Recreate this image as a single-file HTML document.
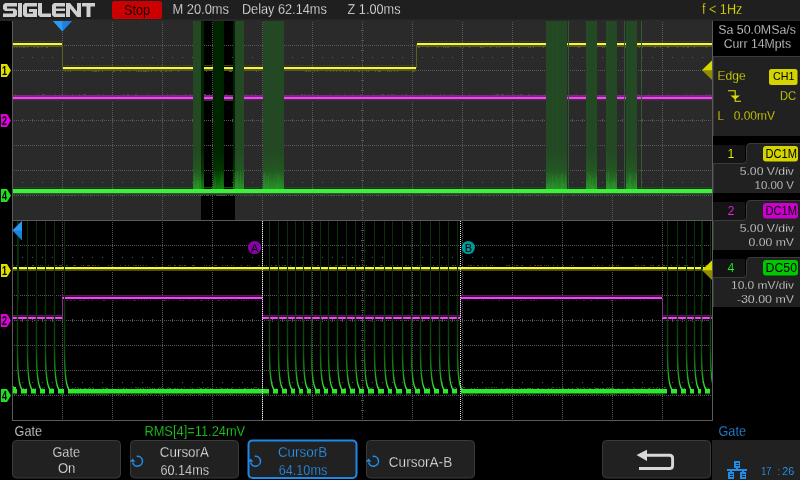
<!DOCTYPE html><html><head><meta charset="utf-8"><style>html,body{margin:0;padding:0;background:#000;overflow:hidden}svg{display:block;will-change:transform}text{font-family:"Liberation Sans",sans-serif}</style></head><body><svg width="800" height="480" viewBox="0 0 800 480" shape-rendering="crispEdges"><rect x="0" y="0" width="800" height="480" fill="#000" />
<rect x="0" y="0" width="800" height="19" fill="#1f1f1f" />
<rect x="0" y="19" width="800" height="2" fill="#252525" />
<rect x="13" y="20" width="699" height="200" fill="#2a2a2a" />
<rect x="201" y="21" width="34" height="199" fill="#000" />
<line x1="14" y1="45.5" x2="712" y2="45.5" stroke="#585858" stroke-width="1" stroke-dasharray="1 1"/>
<line x1="14" y1="70.5" x2="712" y2="70.5" stroke="#585858" stroke-width="1" stroke-dasharray="1 1"/>
<line x1="14" y1="95.5" x2="712" y2="95.5" stroke="#585858" stroke-width="1" stroke-dasharray="1 1"/>
<line x1="14" y1="120.5" x2="712" y2="120.5" stroke="#585858" stroke-width="1" stroke-dasharray="1 1"/>
<line x1="14" y1="145.5" x2="712" y2="145.5" stroke="#585858" stroke-width="1" stroke-dasharray="1 1"/>
<line x1="14" y1="170.5" x2="712" y2="170.5" stroke="#585858" stroke-width="1" stroke-dasharray="1 1"/>
<line x1="14" y1="195.5" x2="712" y2="195.5" stroke="#585858" stroke-width="1" stroke-dasharray="1 1"/>
<line x1="62.5" y1="22" x2="62.5" y2="220" stroke="#585858" stroke-width="1" stroke-dasharray="1 1"/>
<line x1="112.5" y1="22" x2="112.5" y2="220" stroke="#585858" stroke-width="1" stroke-dasharray="1 1"/>
<line x1="162.5" y1="22" x2="162.5" y2="220" stroke="#585858" stroke-width="1" stroke-dasharray="1 1"/>
<line x1="212.5" y1="22" x2="212.5" y2="220" stroke="#585858" stroke-width="1" stroke-dasharray="1 1"/>
<line x1="262.5" y1="22" x2="262.5" y2="220" stroke="#585858" stroke-width="1" stroke-dasharray="1 1"/>
<line x1="312.5" y1="22" x2="312.5" y2="220" stroke="#585858" stroke-width="1" stroke-dasharray="1 1"/>
<line x1="362.5" y1="22" x2="362.5" y2="220" stroke="#585858" stroke-width="1" stroke-dasharray="1 1"/>
<line x1="412.5" y1="22" x2="412.5" y2="220" stroke="#585858" stroke-width="1" stroke-dasharray="1 1"/>
<line x1="462.5" y1="22" x2="462.5" y2="220" stroke="#585858" stroke-width="1" stroke-dasharray="1 1"/>
<line x1="512.5" y1="22" x2="512.5" y2="220" stroke="#585858" stroke-width="1" stroke-dasharray="1 1"/>
<line x1="562.5" y1="22" x2="562.5" y2="220" stroke="#585858" stroke-width="1" stroke-dasharray="1 1"/>
<line x1="612.5" y1="22" x2="612.5" y2="220" stroke="#585858" stroke-width="1" stroke-dasharray="1 1"/>
<line x1="662.5" y1="22" x2="662.5" y2="220" stroke="#585858" stroke-width="1" stroke-dasharray="1 1"/>
<rect x="22" y="57" width="1" height="1" fill="#585858" />
<rect x="32" y="57" width="1" height="1" fill="#585858" />
<rect x="42" y="57" width="1" height="1" fill="#585858" />
<rect x="52" y="57" width="1" height="1" fill="#585858" />
<rect x="72" y="57" width="1" height="1" fill="#585858" />
<rect x="82" y="57" width="1" height="1" fill="#585858" />
<rect x="92" y="57" width="1" height="1" fill="#585858" />
<rect x="102" y="57" width="1" height="1" fill="#585858" />
<rect x="122" y="57" width="1" height="1" fill="#585858" />
<rect x="132" y="57" width="1" height="1" fill="#585858" />
<rect x="142" y="57" width="1" height="1" fill="#585858" />
<rect x="152" y="57" width="1" height="1" fill="#585858" />
<rect x="172" y="57" width="1" height="1" fill="#585858" />
<rect x="182" y="57" width="1" height="1" fill="#585858" />
<rect x="192" y="57" width="1" height="1" fill="#585858" />
<rect x="202" y="57" width="1" height="1" fill="#585858" />
<rect x="222" y="57" width="1" height="1" fill="#585858" />
<rect x="232" y="57" width="1" height="1" fill="#585858" />
<rect x="242" y="57" width="1" height="1" fill="#585858" />
<rect x="252" y="57" width="1" height="1" fill="#585858" />
<rect x="272" y="57" width="1" height="1" fill="#585858" />
<rect x="282" y="57" width="1" height="1" fill="#585858" />
<rect x="292" y="57" width="1" height="1" fill="#585858" />
<rect x="302" y="57" width="1" height="1" fill="#585858" />
<rect x="322" y="57" width="1" height="1" fill="#585858" />
<rect x="332" y="57" width="1" height="1" fill="#585858" />
<rect x="342" y="57" width="1" height="1" fill="#585858" />
<rect x="352" y="57" width="1" height="1" fill="#585858" />
<rect x="372" y="57" width="1" height="1" fill="#585858" />
<rect x="382" y="57" width="1" height="1" fill="#585858" />
<rect x="392" y="57" width="1" height="1" fill="#585858" />
<rect x="402" y="57" width="1" height="1" fill="#585858" />
<rect x="422" y="57" width="1" height="1" fill="#585858" />
<rect x="432" y="57" width="1" height="1" fill="#585858" />
<rect x="442" y="57" width="1" height="1" fill="#585858" />
<rect x="452" y="57" width="1" height="1" fill="#585858" />
<rect x="472" y="57" width="1" height="1" fill="#585858" />
<rect x="482" y="57" width="1" height="1" fill="#585858" />
<rect x="492" y="57" width="1" height="1" fill="#585858" />
<rect x="502" y="57" width="1" height="1" fill="#585858" />
<rect x="522" y="57" width="1" height="1" fill="#585858" />
<rect x="532" y="57" width="1" height="1" fill="#585858" />
<rect x="542" y="57" width="1" height="1" fill="#585858" />
<rect x="552" y="57" width="1" height="1" fill="#585858" />
<rect x="572" y="57" width="1" height="1" fill="#585858" />
<rect x="582" y="57" width="1" height="1" fill="#585858" />
<rect x="592" y="57" width="1" height="1" fill="#585858" />
<rect x="602" y="57" width="1" height="1" fill="#585858" />
<rect x="622" y="57" width="1" height="1" fill="#585858" />
<rect x="632" y="57" width="1" height="1" fill="#585858" />
<rect x="642" y="57" width="1" height="1" fill="#585858" />
<rect x="652" y="57" width="1" height="1" fill="#585858" />
<rect x="672" y="57" width="1" height="1" fill="#585858" />
<rect x="682" y="57" width="1" height="1" fill="#585858" />
<rect x="692" y="57" width="1" height="1" fill="#585858" />
<rect x="702" y="57" width="1" height="1" fill="#585858" />
<rect x="22" y="182" width="1" height="1" fill="#585858" />
<rect x="32" y="182" width="1" height="1" fill="#585858" />
<rect x="42" y="182" width="1" height="1" fill="#585858" />
<rect x="52" y="182" width="1" height="1" fill="#585858" />
<rect x="72" y="182" width="1" height="1" fill="#585858" />
<rect x="82" y="182" width="1" height="1" fill="#585858" />
<rect x="92" y="182" width="1" height="1" fill="#585858" />
<rect x="102" y="182" width="1" height="1" fill="#585858" />
<rect x="122" y="182" width="1" height="1" fill="#585858" />
<rect x="132" y="182" width="1" height="1" fill="#585858" />
<rect x="142" y="182" width="1" height="1" fill="#585858" />
<rect x="152" y="182" width="1" height="1" fill="#585858" />
<rect x="172" y="182" width="1" height="1" fill="#585858" />
<rect x="182" y="182" width="1" height="1" fill="#585858" />
<rect x="192" y="182" width="1" height="1" fill="#585858" />
<rect x="202" y="182" width="1" height="1" fill="#585858" />
<rect x="222" y="182" width="1" height="1" fill="#585858" />
<rect x="232" y="182" width="1" height="1" fill="#585858" />
<rect x="242" y="182" width="1" height="1" fill="#585858" />
<rect x="252" y="182" width="1" height="1" fill="#585858" />
<rect x="272" y="182" width="1" height="1" fill="#585858" />
<rect x="282" y="182" width="1" height="1" fill="#585858" />
<rect x="292" y="182" width="1" height="1" fill="#585858" />
<rect x="302" y="182" width="1" height="1" fill="#585858" />
<rect x="322" y="182" width="1" height="1" fill="#585858" />
<rect x="332" y="182" width="1" height="1" fill="#585858" />
<rect x="342" y="182" width="1" height="1" fill="#585858" />
<rect x="352" y="182" width="1" height="1" fill="#585858" />
<rect x="372" y="182" width="1" height="1" fill="#585858" />
<rect x="382" y="182" width="1" height="1" fill="#585858" />
<rect x="392" y="182" width="1" height="1" fill="#585858" />
<rect x="402" y="182" width="1" height="1" fill="#585858" />
<rect x="422" y="182" width="1" height="1" fill="#585858" />
<rect x="432" y="182" width="1" height="1" fill="#585858" />
<rect x="442" y="182" width="1" height="1" fill="#585858" />
<rect x="452" y="182" width="1" height="1" fill="#585858" />
<rect x="472" y="182" width="1" height="1" fill="#585858" />
<rect x="482" y="182" width="1" height="1" fill="#585858" />
<rect x="492" y="182" width="1" height="1" fill="#585858" />
<rect x="502" y="182" width="1" height="1" fill="#585858" />
<rect x="522" y="182" width="1" height="1" fill="#585858" />
<rect x="532" y="182" width="1" height="1" fill="#585858" />
<rect x="542" y="182" width="1" height="1" fill="#585858" />
<rect x="552" y="182" width="1" height="1" fill="#585858" />
<rect x="572" y="182" width="1" height="1" fill="#585858" />
<rect x="582" y="182" width="1" height="1" fill="#585858" />
<rect x="592" y="182" width="1" height="1" fill="#585858" />
<rect x="602" y="182" width="1" height="1" fill="#585858" />
<rect x="622" y="182" width="1" height="1" fill="#585858" />
<rect x="632" y="182" width="1" height="1" fill="#585858" />
<rect x="642" y="182" width="1" height="1" fill="#585858" />
<rect x="652" y="182" width="1" height="1" fill="#585858" />
<rect x="672" y="182" width="1" height="1" fill="#585858" />
<rect x="682" y="182" width="1" height="1" fill="#585858" />
<rect x="692" y="182" width="1" height="1" fill="#585858" />
<rect x="702" y="182" width="1" height="1" fill="#585858" />
<rect x="22" y="119" width="1" height="3" fill="#585858" />
<rect x="32" y="119" width="1" height="3" fill="#585858" />
<rect x="42" y="119" width="1" height="3" fill="#585858" />
<rect x="52" y="119" width="1" height="3" fill="#585858" />
<rect x="62" y="119" width="1" height="3" fill="#585858" />
<rect x="72" y="119" width="1" height="3" fill="#585858" />
<rect x="82" y="119" width="1" height="3" fill="#585858" />
<rect x="92" y="119" width="1" height="3" fill="#585858" />
<rect x="102" y="119" width="1" height="3" fill="#585858" />
<rect x="112" y="119" width="1" height="3" fill="#585858" />
<rect x="122" y="119" width="1" height="3" fill="#585858" />
<rect x="132" y="119" width="1" height="3" fill="#585858" />
<rect x="142" y="119" width="1" height="3" fill="#585858" />
<rect x="152" y="119" width="1" height="3" fill="#585858" />
<rect x="162" y="119" width="1" height="3" fill="#585858" />
<rect x="172" y="119" width="1" height="3" fill="#585858" />
<rect x="182" y="119" width="1" height="3" fill="#585858" />
<rect x="192" y="119" width="1" height="3" fill="#585858" />
<rect x="202" y="119" width="1" height="3" fill="#585858" />
<rect x="212" y="119" width="1" height="3" fill="#585858" />
<rect x="222" y="119" width="1" height="3" fill="#585858" />
<rect x="232" y="119" width="1" height="3" fill="#585858" />
<rect x="242" y="119" width="1" height="3" fill="#585858" />
<rect x="252" y="119" width="1" height="3" fill="#585858" />
<rect x="262" y="119" width="1" height="3" fill="#585858" />
<rect x="272" y="119" width="1" height="3" fill="#585858" />
<rect x="282" y="119" width="1" height="3" fill="#585858" />
<rect x="292" y="119" width="1" height="3" fill="#585858" />
<rect x="302" y="119" width="1" height="3" fill="#585858" />
<rect x="312" y="119" width="1" height="3" fill="#585858" />
<rect x="322" y="119" width="1" height="3" fill="#585858" />
<rect x="332" y="119" width="1" height="3" fill="#585858" />
<rect x="342" y="119" width="1" height="3" fill="#585858" />
<rect x="352" y="119" width="1" height="3" fill="#585858" />
<rect x="362" y="119" width="1" height="3" fill="#585858" />
<rect x="372" y="119" width="1" height="3" fill="#585858" />
<rect x="382" y="119" width="1" height="3" fill="#585858" />
<rect x="392" y="119" width="1" height="3" fill="#585858" />
<rect x="402" y="119" width="1" height="3" fill="#585858" />
<rect x="412" y="119" width="1" height="3" fill="#585858" />
<rect x="422" y="119" width="1" height="3" fill="#585858" />
<rect x="432" y="119" width="1" height="3" fill="#585858" />
<rect x="442" y="119" width="1" height="3" fill="#585858" />
<rect x="452" y="119" width="1" height="3" fill="#585858" />
<rect x="462" y="119" width="1" height="3" fill="#585858" />
<rect x="472" y="119" width="1" height="3" fill="#585858" />
<rect x="482" y="119" width="1" height="3" fill="#585858" />
<rect x="492" y="119" width="1" height="3" fill="#585858" />
<rect x="502" y="119" width="1" height="3" fill="#585858" />
<rect x="512" y="119" width="1" height="3" fill="#585858" />
<rect x="522" y="119" width="1" height="3" fill="#585858" />
<rect x="532" y="119" width="1" height="3" fill="#585858" />
<rect x="542" y="119" width="1" height="3" fill="#585858" />
<rect x="552" y="119" width="1" height="3" fill="#585858" />
<rect x="562" y="119" width="1" height="3" fill="#585858" />
<rect x="572" y="119" width="1" height="3" fill="#585858" />
<rect x="582" y="119" width="1" height="3" fill="#585858" />
<rect x="592" y="119" width="1" height="3" fill="#585858" />
<rect x="602" y="119" width="1" height="3" fill="#585858" />
<rect x="612" y="119" width="1" height="3" fill="#585858" />
<rect x="622" y="119" width="1" height="3" fill="#585858" />
<rect x="632" y="119" width="1" height="3" fill="#585858" />
<rect x="642" y="119" width="1" height="3" fill="#585858" />
<rect x="652" y="119" width="1" height="3" fill="#585858" />
<rect x="662" y="119" width="1" height="3" fill="#585858" />
<rect x="672" y="119" width="1" height="3" fill="#585858" />
<rect x="682" y="119" width="1" height="3" fill="#585858" />
<rect x="692" y="119" width="1" height="3" fill="#585858" />
<rect x="702" y="119" width="1" height="3" fill="#585858" />
<rect x="361" y="30" width="3" height="1" fill="#585858" />
<rect x="361" y="40" width="3" height="1" fill="#585858" />
<rect x="361" y="50" width="3" height="1" fill="#585858" />
<rect x="361" y="60" width="3" height="1" fill="#585858" />
<rect x="361" y="70" width="3" height="1" fill="#585858" />
<rect x="361" y="80" width="3" height="1" fill="#585858" />
<rect x="361" y="90" width="3" height="1" fill="#585858" />
<rect x="361" y="100" width="3" height="1" fill="#585858" />
<rect x="361" y="110" width="3" height="1" fill="#585858" />
<rect x="361" y="120" width="3" height="1" fill="#585858" />
<rect x="361" y="130" width="3" height="1" fill="#585858" />
<rect x="361" y="140" width="3" height="1" fill="#585858" />
<rect x="361" y="150" width="3" height="1" fill="#585858" />
<rect x="361" y="160" width="3" height="1" fill="#585858" />
<rect x="361" y="170" width="3" height="1" fill="#585858" />
<rect x="361" y="180" width="3" height="1" fill="#585858" />
<rect x="361" y="190" width="3" height="1" fill="#585858" />
<rect x="361" y="200" width="3" height="1" fill="#585858" />
<rect x="361" y="210" width="3" height="1" fill="#585858" />
<line x1="14" y1="245.5" x2="712" y2="245.5" stroke="#585858" stroke-width="1" stroke-dasharray="1 1"/>
<line x1="14" y1="270.5" x2="712" y2="270.5" stroke="#585858" stroke-width="1" stroke-dasharray="1 1"/>
<line x1="14" y1="295.5" x2="712" y2="295.5" stroke="#585858" stroke-width="1" stroke-dasharray="1 1"/>
<line x1="14" y1="320.5" x2="712" y2="320.5" stroke="#585858" stroke-width="1" stroke-dasharray="1 1"/>
<line x1="14" y1="345.5" x2="712" y2="345.5" stroke="#585858" stroke-width="1" stroke-dasharray="1 1"/>
<line x1="14" y1="370.5" x2="712" y2="370.5" stroke="#585858" stroke-width="1" stroke-dasharray="1 1"/>
<line x1="14" y1="395.5" x2="712" y2="395.5" stroke="#585858" stroke-width="1" stroke-dasharray="1 1"/>
<line x1="62.5" y1="222" x2="62.5" y2="420" stroke="#585858" stroke-width="1" stroke-dasharray="1 1"/>
<line x1="112.5" y1="222" x2="112.5" y2="420" stroke="#585858" stroke-width="1" stroke-dasharray="1 1"/>
<line x1="162.5" y1="222" x2="162.5" y2="420" stroke="#585858" stroke-width="1" stroke-dasharray="1 1"/>
<line x1="212.5" y1="222" x2="212.5" y2="420" stroke="#585858" stroke-width="1" stroke-dasharray="1 1"/>
<line x1="262.5" y1="222" x2="262.5" y2="420" stroke="#585858" stroke-width="1" stroke-dasharray="1 1"/>
<line x1="312.5" y1="222" x2="312.5" y2="420" stroke="#585858" stroke-width="1" stroke-dasharray="1 1"/>
<line x1="362.5" y1="222" x2="362.5" y2="420" stroke="#585858" stroke-width="1" stroke-dasharray="1 1"/>
<line x1="412.5" y1="222" x2="412.5" y2="420" stroke="#585858" stroke-width="1" stroke-dasharray="1 1"/>
<line x1="462.5" y1="222" x2="462.5" y2="420" stroke="#585858" stroke-width="1" stroke-dasharray="1 1"/>
<line x1="512.5" y1="222" x2="512.5" y2="420" stroke="#585858" stroke-width="1" stroke-dasharray="1 1"/>
<line x1="562.5" y1="222" x2="562.5" y2="420" stroke="#585858" stroke-width="1" stroke-dasharray="1 1"/>
<line x1="612.5" y1="222" x2="612.5" y2="420" stroke="#585858" stroke-width="1" stroke-dasharray="1 1"/>
<line x1="662.5" y1="222" x2="662.5" y2="420" stroke="#585858" stroke-width="1" stroke-dasharray="1 1"/>
<rect x="22" y="257" width="1" height="1" fill="#585858" />
<rect x="32" y="257" width="1" height="1" fill="#585858" />
<rect x="42" y="257" width="1" height="1" fill="#585858" />
<rect x="52" y="257" width="1" height="1" fill="#585858" />
<rect x="72" y="257" width="1" height="1" fill="#585858" />
<rect x="82" y="257" width="1" height="1" fill="#585858" />
<rect x="92" y="257" width="1" height="1" fill="#585858" />
<rect x="102" y="257" width="1" height="1" fill="#585858" />
<rect x="122" y="257" width="1" height="1" fill="#585858" />
<rect x="132" y="257" width="1" height="1" fill="#585858" />
<rect x="142" y="257" width="1" height="1" fill="#585858" />
<rect x="152" y="257" width="1" height="1" fill="#585858" />
<rect x="172" y="257" width="1" height="1" fill="#585858" />
<rect x="182" y="257" width="1" height="1" fill="#585858" />
<rect x="192" y="257" width="1" height="1" fill="#585858" />
<rect x="202" y="257" width="1" height="1" fill="#585858" />
<rect x="222" y="257" width="1" height="1" fill="#585858" />
<rect x="232" y="257" width="1" height="1" fill="#585858" />
<rect x="242" y="257" width="1" height="1" fill="#585858" />
<rect x="252" y="257" width="1" height="1" fill="#585858" />
<rect x="272" y="257" width="1" height="1" fill="#585858" />
<rect x="282" y="257" width="1" height="1" fill="#585858" />
<rect x="292" y="257" width="1" height="1" fill="#585858" />
<rect x="302" y="257" width="1" height="1" fill="#585858" />
<rect x="322" y="257" width="1" height="1" fill="#585858" />
<rect x="332" y="257" width="1" height="1" fill="#585858" />
<rect x="342" y="257" width="1" height="1" fill="#585858" />
<rect x="352" y="257" width="1" height="1" fill="#585858" />
<rect x="372" y="257" width="1" height="1" fill="#585858" />
<rect x="382" y="257" width="1" height="1" fill="#585858" />
<rect x="392" y="257" width="1" height="1" fill="#585858" />
<rect x="402" y="257" width="1" height="1" fill="#585858" />
<rect x="422" y="257" width="1" height="1" fill="#585858" />
<rect x="432" y="257" width="1" height="1" fill="#585858" />
<rect x="442" y="257" width="1" height="1" fill="#585858" />
<rect x="452" y="257" width="1" height="1" fill="#585858" />
<rect x="472" y="257" width="1" height="1" fill="#585858" />
<rect x="482" y="257" width="1" height="1" fill="#585858" />
<rect x="492" y="257" width="1" height="1" fill="#585858" />
<rect x="502" y="257" width="1" height="1" fill="#585858" />
<rect x="522" y="257" width="1" height="1" fill="#585858" />
<rect x="532" y="257" width="1" height="1" fill="#585858" />
<rect x="542" y="257" width="1" height="1" fill="#585858" />
<rect x="552" y="257" width="1" height="1" fill="#585858" />
<rect x="572" y="257" width="1" height="1" fill="#585858" />
<rect x="582" y="257" width="1" height="1" fill="#585858" />
<rect x="592" y="257" width="1" height="1" fill="#585858" />
<rect x="602" y="257" width="1" height="1" fill="#585858" />
<rect x="622" y="257" width="1" height="1" fill="#585858" />
<rect x="632" y="257" width="1" height="1" fill="#585858" />
<rect x="642" y="257" width="1" height="1" fill="#585858" />
<rect x="652" y="257" width="1" height="1" fill="#585858" />
<rect x="672" y="257" width="1" height="1" fill="#585858" />
<rect x="682" y="257" width="1" height="1" fill="#585858" />
<rect x="692" y="257" width="1" height="1" fill="#585858" />
<rect x="702" y="257" width="1" height="1" fill="#585858" />
<rect x="22" y="382" width="1" height="1" fill="#585858" />
<rect x="32" y="382" width="1" height="1" fill="#585858" />
<rect x="42" y="382" width="1" height="1" fill="#585858" />
<rect x="52" y="382" width="1" height="1" fill="#585858" />
<rect x="72" y="382" width="1" height="1" fill="#585858" />
<rect x="82" y="382" width="1" height="1" fill="#585858" />
<rect x="92" y="382" width="1" height="1" fill="#585858" />
<rect x="102" y="382" width="1" height="1" fill="#585858" />
<rect x="122" y="382" width="1" height="1" fill="#585858" />
<rect x="132" y="382" width="1" height="1" fill="#585858" />
<rect x="142" y="382" width="1" height="1" fill="#585858" />
<rect x="152" y="382" width="1" height="1" fill="#585858" />
<rect x="172" y="382" width="1" height="1" fill="#585858" />
<rect x="182" y="382" width="1" height="1" fill="#585858" />
<rect x="192" y="382" width="1" height="1" fill="#585858" />
<rect x="202" y="382" width="1" height="1" fill="#585858" />
<rect x="222" y="382" width="1" height="1" fill="#585858" />
<rect x="232" y="382" width="1" height="1" fill="#585858" />
<rect x="242" y="382" width="1" height="1" fill="#585858" />
<rect x="252" y="382" width="1" height="1" fill="#585858" />
<rect x="272" y="382" width="1" height="1" fill="#585858" />
<rect x="282" y="382" width="1" height="1" fill="#585858" />
<rect x="292" y="382" width="1" height="1" fill="#585858" />
<rect x="302" y="382" width="1" height="1" fill="#585858" />
<rect x="322" y="382" width="1" height="1" fill="#585858" />
<rect x="332" y="382" width="1" height="1" fill="#585858" />
<rect x="342" y="382" width="1" height="1" fill="#585858" />
<rect x="352" y="382" width="1" height="1" fill="#585858" />
<rect x="372" y="382" width="1" height="1" fill="#585858" />
<rect x="382" y="382" width="1" height="1" fill="#585858" />
<rect x="392" y="382" width="1" height="1" fill="#585858" />
<rect x="402" y="382" width="1" height="1" fill="#585858" />
<rect x="422" y="382" width="1" height="1" fill="#585858" />
<rect x="432" y="382" width="1" height="1" fill="#585858" />
<rect x="442" y="382" width="1" height="1" fill="#585858" />
<rect x="452" y="382" width="1" height="1" fill="#585858" />
<rect x="472" y="382" width="1" height="1" fill="#585858" />
<rect x="482" y="382" width="1" height="1" fill="#585858" />
<rect x="492" y="382" width="1" height="1" fill="#585858" />
<rect x="502" y="382" width="1" height="1" fill="#585858" />
<rect x="522" y="382" width="1" height="1" fill="#585858" />
<rect x="532" y="382" width="1" height="1" fill="#585858" />
<rect x="542" y="382" width="1" height="1" fill="#585858" />
<rect x="552" y="382" width="1" height="1" fill="#585858" />
<rect x="572" y="382" width="1" height="1" fill="#585858" />
<rect x="582" y="382" width="1" height="1" fill="#585858" />
<rect x="592" y="382" width="1" height="1" fill="#585858" />
<rect x="602" y="382" width="1" height="1" fill="#585858" />
<rect x="622" y="382" width="1" height="1" fill="#585858" />
<rect x="632" y="382" width="1" height="1" fill="#585858" />
<rect x="642" y="382" width="1" height="1" fill="#585858" />
<rect x="652" y="382" width="1" height="1" fill="#585858" />
<rect x="672" y="382" width="1" height="1" fill="#585858" />
<rect x="682" y="382" width="1" height="1" fill="#585858" />
<rect x="692" y="382" width="1" height="1" fill="#585858" />
<rect x="702" y="382" width="1" height="1" fill="#585858" />
<rect x="22" y="319" width="1" height="3" fill="#585858" />
<rect x="32" y="319" width="1" height="3" fill="#585858" />
<rect x="42" y="319" width="1" height="3" fill="#585858" />
<rect x="52" y="319" width="1" height="3" fill="#585858" />
<rect x="62" y="319" width="1" height="3" fill="#585858" />
<rect x="72" y="319" width="1" height="3" fill="#585858" />
<rect x="82" y="319" width="1" height="3" fill="#585858" />
<rect x="92" y="319" width="1" height="3" fill="#585858" />
<rect x="102" y="319" width="1" height="3" fill="#585858" />
<rect x="112" y="319" width="1" height="3" fill="#585858" />
<rect x="122" y="319" width="1" height="3" fill="#585858" />
<rect x="132" y="319" width="1" height="3" fill="#585858" />
<rect x="142" y="319" width="1" height="3" fill="#585858" />
<rect x="152" y="319" width="1" height="3" fill="#585858" />
<rect x="162" y="319" width="1" height="3" fill="#585858" />
<rect x="172" y="319" width="1" height="3" fill="#585858" />
<rect x="182" y="319" width="1" height="3" fill="#585858" />
<rect x="192" y="319" width="1" height="3" fill="#585858" />
<rect x="202" y="319" width="1" height="3" fill="#585858" />
<rect x="212" y="319" width="1" height="3" fill="#585858" />
<rect x="222" y="319" width="1" height="3" fill="#585858" />
<rect x="232" y="319" width="1" height="3" fill="#585858" />
<rect x="242" y="319" width="1" height="3" fill="#585858" />
<rect x="252" y="319" width="1" height="3" fill="#585858" />
<rect x="262" y="319" width="1" height="3" fill="#585858" />
<rect x="272" y="319" width="1" height="3" fill="#585858" />
<rect x="282" y="319" width="1" height="3" fill="#585858" />
<rect x="292" y="319" width="1" height="3" fill="#585858" />
<rect x="302" y="319" width="1" height="3" fill="#585858" />
<rect x="312" y="319" width="1" height="3" fill="#585858" />
<rect x="322" y="319" width="1" height="3" fill="#585858" />
<rect x="332" y="319" width="1" height="3" fill="#585858" />
<rect x="342" y="319" width="1" height="3" fill="#585858" />
<rect x="352" y="319" width="1" height="3" fill="#585858" />
<rect x="362" y="319" width="1" height="3" fill="#585858" />
<rect x="372" y="319" width="1" height="3" fill="#585858" />
<rect x="382" y="319" width="1" height="3" fill="#585858" />
<rect x="392" y="319" width="1" height="3" fill="#585858" />
<rect x="402" y="319" width="1" height="3" fill="#585858" />
<rect x="412" y="319" width="1" height="3" fill="#585858" />
<rect x="422" y="319" width="1" height="3" fill="#585858" />
<rect x="432" y="319" width="1" height="3" fill="#585858" />
<rect x="442" y="319" width="1" height="3" fill="#585858" />
<rect x="452" y="319" width="1" height="3" fill="#585858" />
<rect x="462" y="319" width="1" height="3" fill="#585858" />
<rect x="472" y="319" width="1" height="3" fill="#585858" />
<rect x="482" y="319" width="1" height="3" fill="#585858" />
<rect x="492" y="319" width="1" height="3" fill="#585858" />
<rect x="502" y="319" width="1" height="3" fill="#585858" />
<rect x="512" y="319" width="1" height="3" fill="#585858" />
<rect x="522" y="319" width="1" height="3" fill="#585858" />
<rect x="532" y="319" width="1" height="3" fill="#585858" />
<rect x="542" y="319" width="1" height="3" fill="#585858" />
<rect x="552" y="319" width="1" height="3" fill="#585858" />
<rect x="562" y="319" width="1" height="3" fill="#585858" />
<rect x="572" y="319" width="1" height="3" fill="#585858" />
<rect x="582" y="319" width="1" height="3" fill="#585858" />
<rect x="592" y="319" width="1" height="3" fill="#585858" />
<rect x="602" y="319" width="1" height="3" fill="#585858" />
<rect x="612" y="319" width="1" height="3" fill="#585858" />
<rect x="622" y="319" width="1" height="3" fill="#585858" />
<rect x="632" y="319" width="1" height="3" fill="#585858" />
<rect x="642" y="319" width="1" height="3" fill="#585858" />
<rect x="652" y="319" width="1" height="3" fill="#585858" />
<rect x="662" y="319" width="1" height="3" fill="#585858" />
<rect x="672" y="319" width="1" height="3" fill="#585858" />
<rect x="682" y="319" width="1" height="3" fill="#585858" />
<rect x="692" y="319" width="1" height="3" fill="#585858" />
<rect x="702" y="319" width="1" height="3" fill="#585858" />
<rect x="361" y="230" width="3" height="1" fill="#585858" />
<rect x="361" y="240" width="3" height="1" fill="#585858" />
<rect x="361" y="250" width="3" height="1" fill="#585858" />
<rect x="361" y="260" width="3" height="1" fill="#585858" />
<rect x="361" y="270" width="3" height="1" fill="#585858" />
<rect x="361" y="280" width="3" height="1" fill="#585858" />
<rect x="361" y="290" width="3" height="1" fill="#585858" />
<rect x="361" y="300" width="3" height="1" fill="#585858" />
<rect x="361" y="310" width="3" height="1" fill="#585858" />
<rect x="361" y="320" width="3" height="1" fill="#585858" />
<rect x="361" y="330" width="3" height="1" fill="#585858" />
<rect x="361" y="340" width="3" height="1" fill="#585858" />
<rect x="361" y="350" width="3" height="1" fill="#585858" />
<rect x="361" y="360" width="3" height="1" fill="#585858" />
<rect x="361" y="370" width="3" height="1" fill="#585858" />
<rect x="361" y="380" width="3" height="1" fill="#585858" />
<rect x="361" y="390" width="3" height="1" fill="#585858" />
<rect x="361" y="400" width="3" height="1" fill="#585858" />
<rect x="361" y="410" width="3" height="1" fill="#585858" />
<rect x="13" y="41" width="49" height="1" fill="#3c3c1e" />
<rect x="13" y="43" width="49" height="2" fill="#f6f63c" />
<rect x="13" y="45" width="49" height="1" fill="#56561e" />
<rect x="13" y="46" width="49" height="1" fill="#5c5c22" />
<rect x="14" y="47" width="1" height="1" fill="#56562a" />
<rect x="16" y="47" width="1" height="1" fill="#56562a" />
<rect x="19" y="47" width="1" height="1" fill="#56562a" />
<rect x="21" y="47" width="1" height="1" fill="#56562a" />
<rect x="23" y="47" width="1" height="1" fill="#56562a" />
<rect x="24" y="47" width="1" height="1" fill="#56562a" />
<rect x="27" y="47" width="1" height="1" fill="#56562a" />
<rect x="34" y="47" width="1" height="1" fill="#56562a" />
<rect x="37" y="47" width="1" height="1" fill="#56562a" />
<rect x="38" y="47" width="1" height="1" fill="#56562a" />
<rect x="41" y="47" width="1" height="1" fill="#56562a" />
<rect x="46" y="47" width="1" height="1" fill="#56562a" />
<rect x="47" y="47" width="1" height="1" fill="#56562a" />
<rect x="62" y="44" width="1" height="24" fill="#5e5e20" />
<rect x="63" y="65" width="353" height="1" fill="#3c3c1e" />
<rect x="63" y="67" width="353" height="2" fill="#f6f63c" />
<rect x="63" y="69" width="353" height="1" fill="#56561e" />
<rect x="63" y="70" width="353" height="1" fill="#5c5c22" />
<rect x="65" y="71" width="1" height="1" fill="#56562a" />
<rect x="68" y="71" width="1" height="1" fill="#56562a" />
<rect x="70" y="71" width="1" height="1" fill="#56562a" />
<rect x="84" y="71" width="1" height="1" fill="#56562a" />
<rect x="92" y="71" width="1" height="1" fill="#56562a" />
<rect x="94" y="71" width="1" height="1" fill="#56562a" />
<rect x="95" y="71" width="1" height="1" fill="#56562a" />
<rect x="96" y="71" width="1" height="1" fill="#56562a" />
<rect x="98" y="71" width="1" height="1" fill="#56562a" />
<rect x="102" y="71" width="1" height="1" fill="#56562a" />
<rect x="113" y="71" width="1" height="1" fill="#56562a" />
<rect x="114" y="71" width="1" height="1" fill="#56562a" />
<rect x="120" y="71" width="1" height="1" fill="#56562a" />
<rect x="129" y="71" width="1" height="1" fill="#56562a" />
<rect x="136" y="71" width="1" height="1" fill="#56562a" />
<rect x="138" y="71" width="1" height="1" fill="#56562a" />
<rect x="139" y="71" width="1" height="1" fill="#56562a" />
<rect x="141" y="71" width="1" height="1" fill="#56562a" />
<rect x="143" y="71" width="1" height="1" fill="#56562a" />
<rect x="144" y="71" width="1" height="1" fill="#56562a" />
<rect x="145" y="71" width="1" height="1" fill="#56562a" />
<rect x="146" y="71" width="1" height="1" fill="#56562a" />
<rect x="148" y="71" width="1" height="1" fill="#56562a" />
<rect x="151" y="71" width="1" height="1" fill="#56562a" />
<rect x="155" y="71" width="1" height="1" fill="#56562a" />
<rect x="160" y="71" width="1" height="1" fill="#56562a" />
<rect x="161" y="71" width="1" height="1" fill="#56562a" />
<rect x="165" y="71" width="1" height="1" fill="#56562a" />
<rect x="166" y="71" width="1" height="1" fill="#56562a" />
<rect x="169" y="71" width="1" height="1" fill="#56562a" />
<rect x="171" y="71" width="1" height="1" fill="#56562a" />
<rect x="178" y="71" width="1" height="1" fill="#56562a" />
<rect x="193" y="71" width="1" height="1" fill="#56562a" />
<rect x="194" y="71" width="1" height="1" fill="#56562a" />
<rect x="206" y="71" width="1" height="1" fill="#56562a" />
<rect x="214" y="71" width="1" height="1" fill="#56562a" />
<rect x="220" y="71" width="1" height="1" fill="#56562a" />
<rect x="229" y="71" width="1" height="1" fill="#56562a" />
<rect x="230" y="71" width="1" height="1" fill="#56562a" />
<rect x="231" y="71" width="1" height="1" fill="#56562a" />
<rect x="234" y="71" width="1" height="1" fill="#56562a" />
<rect x="240" y="71" width="1" height="1" fill="#56562a" />
<rect x="241" y="71" width="1" height="1" fill="#56562a" />
<rect x="256" y="71" width="1" height="1" fill="#56562a" />
<rect x="267" y="71" width="1" height="1" fill="#56562a" />
<rect x="269" y="71" width="1" height="1" fill="#56562a" />
<rect x="270" y="71" width="1" height="1" fill="#56562a" />
<rect x="272" y="71" width="1" height="1" fill="#56562a" />
<rect x="280" y="71" width="1" height="1" fill="#56562a" />
<rect x="305" y="71" width="1" height="1" fill="#56562a" />
<rect x="306" y="71" width="1" height="1" fill="#56562a" />
<rect x="308" y="71" width="1" height="1" fill="#56562a" />
<rect x="310" y="71" width="1" height="1" fill="#56562a" />
<rect x="314" y="71" width="1" height="1" fill="#56562a" />
<rect x="317" y="71" width="1" height="1" fill="#56562a" />
<rect x="326" y="71" width="1" height="1" fill="#56562a" />
<rect x="330" y="71" width="1" height="1" fill="#56562a" />
<rect x="333" y="71" width="1" height="1" fill="#56562a" />
<rect x="336" y="71" width="1" height="1" fill="#56562a" />
<rect x="340" y="71" width="1" height="1" fill="#56562a" />
<rect x="344" y="71" width="1" height="1" fill="#56562a" />
<rect x="346" y="71" width="1" height="1" fill="#56562a" />
<rect x="349" y="71" width="1" height="1" fill="#56562a" />
<rect x="354" y="71" width="1" height="1" fill="#56562a" />
<rect x="358" y="71" width="1" height="1" fill="#56562a" />
<rect x="359" y="71" width="1" height="1" fill="#56562a" />
<rect x="362" y="71" width="1" height="1" fill="#56562a" />
<rect x="366" y="71" width="1" height="1" fill="#56562a" />
<rect x="368" y="71" width="1" height="1" fill="#56562a" />
<rect x="375" y="71" width="1" height="1" fill="#56562a" />
<rect x="378" y="71" width="1" height="1" fill="#56562a" />
<rect x="379" y="71" width="1" height="1" fill="#56562a" />
<rect x="380" y="71" width="1" height="1" fill="#56562a" />
<rect x="387" y="71" width="1" height="1" fill="#56562a" />
<rect x="389" y="71" width="1" height="1" fill="#56562a" />
<rect x="391" y="71" width="1" height="1" fill="#56562a" />
<rect x="394" y="71" width="1" height="1" fill="#56562a" />
<rect x="397" y="71" width="1" height="1" fill="#56562a" />
<rect x="412" y="71" width="1" height="1" fill="#56562a" />
<rect x="413" y="71" width="1" height="1" fill="#56562a" />
<rect x="414" y="71" width="1" height="1" fill="#56562a" />
<rect x="416" y="44" width="1" height="24" fill="#5e5e20" />
<rect x="417" y="41" width="295" height="1" fill="#3c3c1e" />
<rect x="417" y="43" width="295" height="2" fill="#f6f63c" />
<rect x="417" y="45" width="295" height="1" fill="#56561e" />
<rect x="417" y="46" width="295" height="1" fill="#5c5c22" />
<rect x="418" y="47" width="1" height="1" fill="#56562a" />
<rect x="419" y="47" width="1" height="1" fill="#56562a" />
<rect x="427" y="47" width="1" height="1" fill="#56562a" />
<rect x="437" y="47" width="1" height="1" fill="#56562a" />
<rect x="443" y="47" width="1" height="1" fill="#56562a" />
<rect x="445" y="47" width="1" height="1" fill="#56562a" />
<rect x="447" y="47" width="1" height="1" fill="#56562a" />
<rect x="448" y="47" width="1" height="1" fill="#56562a" />
<rect x="460" y="47" width="1" height="1" fill="#56562a" />
<rect x="463" y="47" width="1" height="1" fill="#56562a" />
<rect x="469" y="47" width="1" height="1" fill="#56562a" />
<rect x="480" y="47" width="1" height="1" fill="#56562a" />
<rect x="481" y="47" width="1" height="1" fill="#56562a" />
<rect x="483" y="47" width="1" height="1" fill="#56562a" />
<rect x="490" y="47" width="1" height="1" fill="#56562a" />
<rect x="496" y="47" width="1" height="1" fill="#56562a" />
<rect x="499" y="47" width="1" height="1" fill="#56562a" />
<rect x="512" y="47" width="1" height="1" fill="#56562a" />
<rect x="513" y="47" width="1" height="1" fill="#56562a" />
<rect x="518" y="47" width="1" height="1" fill="#56562a" />
<rect x="519" y="47" width="1" height="1" fill="#56562a" />
<rect x="528" y="47" width="1" height="1" fill="#56562a" />
<rect x="530" y="47" width="1" height="1" fill="#56562a" />
<rect x="533" y="47" width="1" height="1" fill="#56562a" />
<rect x="543" y="47" width="1" height="1" fill="#56562a" />
<rect x="546" y="47" width="1" height="1" fill="#56562a" />
<rect x="554" y="47" width="1" height="1" fill="#56562a" />
<rect x="555" y="47" width="1" height="1" fill="#56562a" />
<rect x="559" y="47" width="1" height="1" fill="#56562a" />
<rect x="563" y="47" width="1" height="1" fill="#56562a" />
<rect x="566" y="47" width="1" height="1" fill="#56562a" />
<rect x="578" y="47" width="1" height="1" fill="#56562a" />
<rect x="579" y="47" width="1" height="1" fill="#56562a" />
<rect x="586" y="47" width="1" height="1" fill="#56562a" />
<rect x="596" y="47" width="1" height="1" fill="#56562a" />
<rect x="602" y="47" width="1" height="1" fill="#56562a" />
<rect x="604" y="47" width="1" height="1" fill="#56562a" />
<rect x="615" y="47" width="1" height="1" fill="#56562a" />
<rect x="616" y="47" width="1" height="1" fill="#56562a" />
<rect x="624" y="47" width="1" height="1" fill="#56562a" />
<rect x="625" y="47" width="1" height="1" fill="#56562a" />
<rect x="626" y="47" width="1" height="1" fill="#56562a" />
<rect x="628" y="47" width="1" height="1" fill="#56562a" />
<rect x="639" y="47" width="1" height="1" fill="#56562a" />
<rect x="642" y="47" width="1" height="1" fill="#56562a" />
<rect x="654" y="47" width="1" height="1" fill="#56562a" />
<rect x="655" y="47" width="1" height="1" fill="#56562a" />
<rect x="660" y="47" width="1" height="1" fill="#56562a" />
<rect x="667" y="47" width="1" height="1" fill="#56562a" />
<rect x="668" y="47" width="1" height="1" fill="#56562a" />
<rect x="677" y="47" width="1" height="1" fill="#56562a" />
<rect x="683" y="47" width="1" height="1" fill="#56562a" />
<rect x="687" y="47" width="1" height="1" fill="#56562a" />
<rect x="688" y="47" width="1" height="1" fill="#56562a" />
<rect x="694" y="47" width="1" height="1" fill="#56562a" />
<rect x="706" y="47" width="1" height="1" fill="#56562a" />
<rect x="13" y="95" width="699" height="2" fill="#7a2a7a" />
<rect x="13" y="97" width="699" height="2" fill="#f842f8" />
<rect x="13" y="99" width="699" height="1" fill="#4a2a4a" />
<rect x="13" y="100" width="699" height="1" fill="#382c38" />
<rect x="15" y="94" width="1" height="1" fill="#5a385a" />
<rect x="38" y="94" width="1" height="1" fill="#5a385a" />
<rect x="42" y="94" width="1" height="1" fill="#5a385a" />
<rect x="43" y="94" width="1" height="1" fill="#5a385a" />
<rect x="44" y="94" width="1" height="1" fill="#5a385a" />
<rect x="55" y="94" width="1" height="1" fill="#5a385a" />
<rect x="61" y="94" width="1" height="1" fill="#5a385a" />
<rect x="65" y="94" width="1" height="1" fill="#5a385a" />
<rect x="72" y="94" width="1" height="1" fill="#5a385a" />
<rect x="79" y="94" width="1" height="1" fill="#5a385a" />
<rect x="83" y="94" width="1" height="1" fill="#5a385a" />
<rect x="84" y="94" width="1" height="1" fill="#5a385a" />
<rect x="85" y="94" width="1" height="1" fill="#5a385a" />
<rect x="98" y="94" width="1" height="1" fill="#5a385a" />
<rect x="103" y="94" width="1" height="1" fill="#5a385a" />
<rect x="123" y="94" width="1" height="1" fill="#5a385a" />
<rect x="127" y="94" width="1" height="1" fill="#5a385a" />
<rect x="128" y="94" width="1" height="1" fill="#5a385a" />
<rect x="135" y="94" width="1" height="1" fill="#5a385a" />
<rect x="136" y="94" width="1" height="1" fill="#5a385a" />
<rect x="147" y="94" width="1" height="1" fill="#5a385a" />
<rect x="167" y="94" width="1" height="1" fill="#5a385a" />
<rect x="172" y="94" width="1" height="1" fill="#5a385a" />
<rect x="174" y="94" width="1" height="1" fill="#5a385a" />
<rect x="185" y="94" width="1" height="1" fill="#5a385a" />
<rect x="190" y="94" width="1" height="1" fill="#5a385a" />
<rect x="196" y="94" width="1" height="1" fill="#5a385a" />
<rect x="204" y="94" width="1" height="1" fill="#5a385a" />
<rect x="205" y="94" width="1" height="1" fill="#5a385a" />
<rect x="209" y="94" width="1" height="1" fill="#5a385a" />
<rect x="226" y="94" width="1" height="1" fill="#5a385a" />
<rect x="234" y="94" width="1" height="1" fill="#5a385a" />
<rect x="238" y="94" width="1" height="1" fill="#5a385a" />
<rect x="242" y="94" width="1" height="1" fill="#5a385a" />
<rect x="246" y="94" width="1" height="1" fill="#5a385a" />
<rect x="251" y="94" width="1" height="1" fill="#5a385a" />
<rect x="255" y="94" width="1" height="1" fill="#5a385a" />
<rect x="272" y="94" width="1" height="1" fill="#5a385a" />
<rect x="276" y="94" width="1" height="1" fill="#5a385a" />
<rect x="279" y="94" width="1" height="1" fill="#5a385a" />
<rect x="281" y="94" width="1" height="1" fill="#5a385a" />
<rect x="292" y="94" width="1" height="1" fill="#5a385a" />
<rect x="301" y="94" width="1" height="1" fill="#5a385a" />
<rect x="302" y="94" width="1" height="1" fill="#5a385a" />
<rect x="304" y="94" width="1" height="1" fill="#5a385a" />
<rect x="307" y="94" width="1" height="1" fill="#5a385a" />
<rect x="309" y="94" width="1" height="1" fill="#5a385a" />
<rect x="313" y="94" width="1" height="1" fill="#5a385a" />
<rect x="317" y="94" width="1" height="1" fill="#5a385a" />
<rect x="330" y="94" width="1" height="1" fill="#5a385a" />
<rect x="337" y="94" width="1" height="1" fill="#5a385a" />
<rect x="344" y="94" width="1" height="1" fill="#5a385a" />
<rect x="352" y="94" width="1" height="1" fill="#5a385a" />
<rect x="360" y="94" width="1" height="1" fill="#5a385a" />
<rect x="373" y="94" width="1" height="1" fill="#5a385a" />
<rect x="381" y="94" width="1" height="1" fill="#5a385a" />
<rect x="382" y="94" width="1" height="1" fill="#5a385a" />
<rect x="383" y="94" width="1" height="1" fill="#5a385a" />
<rect x="388" y="94" width="1" height="1" fill="#5a385a" />
<rect x="391" y="94" width="1" height="1" fill="#5a385a" />
<rect x="392" y="94" width="1" height="1" fill="#5a385a" />
<rect x="394" y="94" width="1" height="1" fill="#5a385a" />
<rect x="402" y="94" width="1" height="1" fill="#5a385a" />
<rect x="405" y="94" width="1" height="1" fill="#5a385a" />
<rect x="406" y="94" width="1" height="1" fill="#5a385a" />
<rect x="412" y="94" width="1" height="1" fill="#5a385a" />
<rect x="422" y="94" width="1" height="1" fill="#5a385a" />
<rect x="426" y="94" width="1" height="1" fill="#5a385a" />
<rect x="428" y="94" width="1" height="1" fill="#5a385a" />
<rect x="431" y="94" width="1" height="1" fill="#5a385a" />
<rect x="440" y="94" width="1" height="1" fill="#5a385a" />
<rect x="444" y="94" width="1" height="1" fill="#5a385a" />
<rect x="451" y="94" width="1" height="1" fill="#5a385a" />
<rect x="453" y="94" width="1" height="1" fill="#5a385a" />
<rect x="469" y="94" width="1" height="1" fill="#5a385a" />
<rect x="494" y="94" width="1" height="1" fill="#5a385a" />
<rect x="496" y="94" width="1" height="1" fill="#5a385a" />
<rect x="497" y="94" width="1" height="1" fill="#5a385a" />
<rect x="498" y="94" width="1" height="1" fill="#5a385a" />
<rect x="501" y="94" width="1" height="1" fill="#5a385a" />
<rect x="502" y="94" width="1" height="1" fill="#5a385a" />
<rect x="503" y="94" width="1" height="1" fill="#5a385a" />
<rect x="508" y="94" width="1" height="1" fill="#5a385a" />
<rect x="514" y="94" width="1" height="1" fill="#5a385a" />
<rect x="518" y="94" width="1" height="1" fill="#5a385a" />
<rect x="520" y="94" width="1" height="1" fill="#5a385a" />
<rect x="521" y="94" width="1" height="1" fill="#5a385a" />
<rect x="528" y="94" width="1" height="1" fill="#5a385a" />
<rect x="529" y="94" width="1" height="1" fill="#5a385a" />
<rect x="534" y="94" width="1" height="1" fill="#5a385a" />
<rect x="544" y="94" width="1" height="1" fill="#5a385a" />
<rect x="553" y="94" width="1" height="1" fill="#5a385a" />
<rect x="556" y="94" width="1" height="1" fill="#5a385a" />
<rect x="560" y="94" width="1" height="1" fill="#5a385a" />
<rect x="574" y="94" width="1" height="1" fill="#5a385a" />
<rect x="576" y="94" width="1" height="1" fill="#5a385a" />
<rect x="585" y="94" width="1" height="1" fill="#5a385a" />
<rect x="587" y="94" width="1" height="1" fill="#5a385a" />
<rect x="610" y="94" width="1" height="1" fill="#5a385a" />
<rect x="628" y="94" width="1" height="1" fill="#5a385a" />
<rect x="630" y="94" width="1" height="1" fill="#5a385a" />
<rect x="638" y="94" width="1" height="1" fill="#5a385a" />
<rect x="641" y="94" width="1" height="1" fill="#5a385a" />
<rect x="648" y="94" width="1" height="1" fill="#5a385a" />
<rect x="668" y="94" width="1" height="1" fill="#5a385a" />
<rect x="686" y="94" width="1" height="1" fill="#5a385a" />
<rect x="692" y="94" width="1" height="1" fill="#5a385a" />
<rect x="706" y="94" width="1" height="1" fill="#5a385a" />
<rect x="709" y="94" width="1" height="1" fill="#5a385a" />
<rect x="13" y="187" width="699" height="1" fill="#1e4a1e" />
<rect x="13" y="189" width="699" height="4" fill="#3cf03c" />
<rect x="13" y="193" width="699" height="1" fill="#2e5a2e" />
<rect x="13" y="194" width="699" height="1" fill="#2a3a2a" />
<rect x="13" y="195" width="1" height="1" fill="#2e5a2e" />
<rect x="27" y="195" width="1" height="1" fill="#2e5a2e" />
<rect x="42" y="195" width="1" height="1" fill="#2e5a2e" />
<rect x="50" y="195" width="1" height="1" fill="#2e5a2e" />
<rect x="51" y="195" width="1" height="1" fill="#2e5a2e" />
<rect x="63" y="195" width="1" height="1" fill="#2e5a2e" />
<rect x="67" y="195" width="1" height="1" fill="#2e5a2e" />
<rect x="70" y="195" width="1" height="1" fill="#2e5a2e" />
<rect x="71" y="195" width="1" height="1" fill="#2e5a2e" />
<rect x="75" y="195" width="1" height="1" fill="#2e5a2e" />
<rect x="76" y="195" width="1" height="1" fill="#2e5a2e" />
<rect x="80" y="195" width="1" height="1" fill="#2e5a2e" />
<rect x="83" y="195" width="1" height="1" fill="#2e5a2e" />
<rect x="91" y="195" width="1" height="1" fill="#2e5a2e" />
<rect x="100" y="195" width="1" height="1" fill="#2e5a2e" />
<rect x="102" y="195" width="1" height="1" fill="#2e5a2e" />
<rect x="104" y="195" width="1" height="1" fill="#2e5a2e" />
<rect x="109" y="195" width="1" height="1" fill="#2e5a2e" />
<rect x="118" y="195" width="1" height="1" fill="#2e5a2e" />
<rect x="121" y="195" width="1" height="1" fill="#2e5a2e" />
<rect x="130" y="195" width="1" height="1" fill="#2e5a2e" />
<rect x="159" y="195" width="1" height="1" fill="#2e5a2e" />
<rect x="163" y="195" width="1" height="1" fill="#2e5a2e" />
<rect x="165" y="195" width="1" height="1" fill="#2e5a2e" />
<rect x="166" y="195" width="1" height="1" fill="#2e5a2e" />
<rect x="182" y="195" width="1" height="1" fill="#2e5a2e" />
<rect x="183" y="195" width="1" height="1" fill="#2e5a2e" />
<rect x="184" y="195" width="1" height="1" fill="#2e5a2e" />
<rect x="199" y="195" width="1" height="1" fill="#2e5a2e" />
<rect x="201" y="195" width="1" height="1" fill="#2e5a2e" />
<rect x="202" y="195" width="1" height="1" fill="#2e5a2e" />
<rect x="207" y="195" width="1" height="1" fill="#2e5a2e" />
<rect x="214" y="195" width="1" height="1" fill="#2e5a2e" />
<rect x="217" y="195" width="1" height="1" fill="#2e5a2e" />
<rect x="218" y="195" width="1" height="1" fill="#2e5a2e" />
<rect x="219" y="195" width="1" height="1" fill="#2e5a2e" />
<rect x="221" y="195" width="1" height="1" fill="#2e5a2e" />
<rect x="223" y="195" width="1" height="1" fill="#2e5a2e" />
<rect x="225" y="195" width="1" height="1" fill="#2e5a2e" />
<rect x="226" y="195" width="1" height="1" fill="#2e5a2e" />
<rect x="230" y="195" width="1" height="1" fill="#2e5a2e" />
<rect x="231" y="195" width="1" height="1" fill="#2e5a2e" />
<rect x="236" y="195" width="1" height="1" fill="#2e5a2e" />
<rect x="244" y="195" width="1" height="1" fill="#2e5a2e" />
<rect x="245" y="195" width="1" height="1" fill="#2e5a2e" />
<rect x="248" y="195" width="1" height="1" fill="#2e5a2e" />
<rect x="251" y="195" width="1" height="1" fill="#2e5a2e" />
<rect x="254" y="195" width="1" height="1" fill="#2e5a2e" />
<rect x="259" y="195" width="1" height="1" fill="#2e5a2e" />
<rect x="271" y="195" width="1" height="1" fill="#2e5a2e" />
<rect x="289" y="195" width="1" height="1" fill="#2e5a2e" />
<rect x="295" y="195" width="1" height="1" fill="#2e5a2e" />
<rect x="306" y="195" width="1" height="1" fill="#2e5a2e" />
<rect x="321" y="195" width="1" height="1" fill="#2e5a2e" />
<rect x="331" y="195" width="1" height="1" fill="#2e5a2e" />
<rect x="332" y="195" width="1" height="1" fill="#2e5a2e" />
<rect x="333" y="195" width="1" height="1" fill="#2e5a2e" />
<rect x="339" y="195" width="1" height="1" fill="#2e5a2e" />
<rect x="340" y="195" width="1" height="1" fill="#2e5a2e" />
<rect x="343" y="195" width="1" height="1" fill="#2e5a2e" />
<rect x="346" y="195" width="1" height="1" fill="#2e5a2e" />
<rect x="350" y="195" width="1" height="1" fill="#2e5a2e" />
<rect x="351" y="195" width="1" height="1" fill="#2e5a2e" />
<rect x="364" y="195" width="1" height="1" fill="#2e5a2e" />
<rect x="366" y="195" width="1" height="1" fill="#2e5a2e" />
<rect x="367" y="195" width="1" height="1" fill="#2e5a2e" />
<rect x="368" y="195" width="1" height="1" fill="#2e5a2e" />
<rect x="374" y="195" width="1" height="1" fill="#2e5a2e" />
<rect x="377" y="195" width="1" height="1" fill="#2e5a2e" />
<rect x="386" y="195" width="1" height="1" fill="#2e5a2e" />
<rect x="390" y="195" width="1" height="1" fill="#2e5a2e" />
<rect x="396" y="195" width="1" height="1" fill="#2e5a2e" />
<rect x="401" y="195" width="1" height="1" fill="#2e5a2e" />
<rect x="402" y="195" width="1" height="1" fill="#2e5a2e" />
<rect x="409" y="195" width="1" height="1" fill="#2e5a2e" />
<rect x="412" y="195" width="1" height="1" fill="#2e5a2e" />
<rect x="414" y="195" width="1" height="1" fill="#2e5a2e" />
<rect x="416" y="195" width="1" height="1" fill="#2e5a2e" />
<rect x="418" y="195" width="1" height="1" fill="#2e5a2e" />
<rect x="420" y="195" width="1" height="1" fill="#2e5a2e" />
<rect x="421" y="195" width="1" height="1" fill="#2e5a2e" />
<rect x="427" y="195" width="1" height="1" fill="#2e5a2e" />
<rect x="429" y="195" width="1" height="1" fill="#2e5a2e" />
<rect x="438" y="195" width="1" height="1" fill="#2e5a2e" />
<rect x="440" y="195" width="1" height="1" fill="#2e5a2e" />
<rect x="443" y="195" width="1" height="1" fill="#2e5a2e" />
<rect x="447" y="195" width="1" height="1" fill="#2e5a2e" />
<rect x="451" y="195" width="1" height="1" fill="#2e5a2e" />
<rect x="455" y="195" width="1" height="1" fill="#2e5a2e" />
<rect x="457" y="195" width="1" height="1" fill="#2e5a2e" />
<rect x="469" y="195" width="1" height="1" fill="#2e5a2e" />
<rect x="472" y="195" width="1" height="1" fill="#2e5a2e" />
<rect x="476" y="195" width="1" height="1" fill="#2e5a2e" />
<rect x="479" y="195" width="1" height="1" fill="#2e5a2e" />
<rect x="480" y="195" width="1" height="1" fill="#2e5a2e" />
<rect x="483" y="195" width="1" height="1" fill="#2e5a2e" />
<rect x="488" y="195" width="1" height="1" fill="#2e5a2e" />
<rect x="489" y="195" width="1" height="1" fill="#2e5a2e" />
<rect x="492" y="195" width="1" height="1" fill="#2e5a2e" />
<rect x="493" y="195" width="1" height="1" fill="#2e5a2e" />
<rect x="494" y="195" width="1" height="1" fill="#2e5a2e" />
<rect x="504" y="195" width="1" height="1" fill="#2e5a2e" />
<rect x="508" y="195" width="1" height="1" fill="#2e5a2e" />
<rect x="514" y="195" width="1" height="1" fill="#2e5a2e" />
<rect x="519" y="195" width="1" height="1" fill="#2e5a2e" />
<rect x="522" y="195" width="1" height="1" fill="#2e5a2e" />
<rect x="525" y="195" width="1" height="1" fill="#2e5a2e" />
<rect x="529" y="195" width="1" height="1" fill="#2e5a2e" />
<rect x="537" y="195" width="1" height="1" fill="#2e5a2e" />
<rect x="544" y="195" width="1" height="1" fill="#2e5a2e" />
<rect x="547" y="195" width="1" height="1" fill="#2e5a2e" />
<rect x="548" y="195" width="1" height="1" fill="#2e5a2e" />
<rect x="551" y="195" width="1" height="1" fill="#2e5a2e" />
<rect x="552" y="195" width="1" height="1" fill="#2e5a2e" />
<rect x="554" y="195" width="1" height="1" fill="#2e5a2e" />
<rect x="555" y="195" width="1" height="1" fill="#2e5a2e" />
<rect x="560" y="195" width="1" height="1" fill="#2e5a2e" />
<rect x="563" y="195" width="1" height="1" fill="#2e5a2e" />
<rect x="564" y="195" width="1" height="1" fill="#2e5a2e" />
<rect x="568" y="195" width="1" height="1" fill="#2e5a2e" />
<rect x="570" y="195" width="1" height="1" fill="#2e5a2e" />
<rect x="573" y="195" width="1" height="1" fill="#2e5a2e" />
<rect x="576" y="195" width="1" height="1" fill="#2e5a2e" />
<rect x="595" y="195" width="1" height="1" fill="#2e5a2e" />
<rect x="604" y="195" width="1" height="1" fill="#2e5a2e" />
<rect x="607" y="195" width="1" height="1" fill="#2e5a2e" />
<rect x="608" y="195" width="1" height="1" fill="#2e5a2e" />
<rect x="616" y="195" width="1" height="1" fill="#2e5a2e" />
<rect x="631" y="195" width="1" height="1" fill="#2e5a2e" />
<rect x="638" y="195" width="1" height="1" fill="#2e5a2e" />
<rect x="639" y="195" width="1" height="1" fill="#2e5a2e" />
<rect x="640" y="195" width="1" height="1" fill="#2e5a2e" />
<rect x="645" y="195" width="1" height="1" fill="#2e5a2e" />
<rect x="663" y="195" width="1" height="1" fill="#2e5a2e" />
<rect x="673" y="195" width="1" height="1" fill="#2e5a2e" />
<rect x="674" y="195" width="1" height="1" fill="#2e5a2e" />
<rect x="677" y="195" width="1" height="1" fill="#2e5a2e" />
<rect x="681" y="195" width="1" height="1" fill="#2e5a2e" />
<rect x="685" y="195" width="1" height="1" fill="#2e5a2e" />
<rect x="700" y="195" width="1" height="1" fill="#2e5a2e" />
<rect x="702" y="195" width="1" height="1" fill="#2e5a2e" />
<defs><linearGradient id="cg" x1="0" y1="0" x2="0" y2="1"><stop offset="0" stop-color="#0f0" stop-opacity="0"/><stop offset="0.5" stop-color="#2f2" stop-opacity="0.07"/><stop offset="1" stop-color="#3f3" stop-opacity="0.36"/></linearGradient></defs>
<rect x="193" y="21" width="8" height="168" fill="#2a2a2a" />
<rect x="201" y="21" width="3" height="168" fill="#000" />
<rect x="193" y="21" width="11" height="168" fill="#00ff00" fill-opacity="0.14"/>
<rect x="193" y="21" width="1" height="168" fill="#00ff00" fill-opacity="0.014"/>
<rect x="196" y="21" width="1" height="168" fill="#00ff00" fill-opacity="0.013"/>
<rect x="198" y="21" width="1" height="168" fill="#00ff00" fill-opacity="0.011"/>
<rect x="203" y="21" width="1" height="168" fill="#00ff00" fill-opacity="0.011"/>
<rect x="193" y="150" width="11" height="39" fill="url(#cg)" />
<rect x="193" y="183" width="1" height="6" fill="#44ff44" fill-opacity="0.07"/>
<rect x="194" y="175" width="1" height="14" fill="#44ff44" fill-opacity="0.08"/>
<rect x="195" y="185" width="1" height="4" fill="#44ff44" fill-opacity="0.10"/>
<rect x="196" y="177" width="1" height="12" fill="#44ff44" fill-opacity="0.06"/>
<rect x="197" y="180" width="1" height="9" fill="#44ff44" fill-opacity="0.12"/>
<rect x="198" y="181" width="1" height="8" fill="#44ff44" fill-opacity="0.12"/>
<rect x="199" y="187" width="1" height="2" fill="#44ff44" fill-opacity="0.03"/>
<rect x="200" y="179" width="1" height="10" fill="#44ff44" fill-opacity="0.08"/>
<rect x="201" y="172" width="1" height="17" fill="#44ff44" fill-opacity="0.06"/>
<rect x="202" y="178" width="1" height="11" fill="#44ff44" fill-opacity="0.08"/>
<rect x="203" y="174" width="1" height="15" fill="#44ff44" fill-opacity="0.08"/>
<rect x="213" y="21" width="11" height="168" fill="#000" />
<rect x="213" y="21" width="11" height="168" fill="#00ff00" fill-opacity="0.14"/>
<rect x="215" y="21" width="1" height="168" fill="#00ff00" fill-opacity="0.012"/>
<rect x="217" y="21" width="1" height="168" fill="#00ff00" fill-opacity="0.024"/>
<rect x="220" y="21" width="1" height="168" fill="#00ff00" fill-opacity="0.012"/>
<rect x="213" y="150" width="11" height="39" fill="url(#cg)" />
<rect x="213" y="181" width="1" height="8" fill="#44ff44" fill-opacity="0.12"/>
<rect x="214" y="172" width="1" height="17" fill="#44ff44" fill-opacity="0.07"/>
<rect x="215" y="177" width="1" height="12" fill="#44ff44" fill-opacity="0.09"/>
<rect x="216" y="185" width="1" height="4" fill="#44ff44" fill-opacity="0.05"/>
<rect x="217" y="177" width="1" height="12" fill="#44ff44" fill-opacity="0.06"/>
<rect x="218" y="185" width="1" height="4" fill="#44ff44" fill-opacity="0.10"/>
<rect x="219" y="171" width="1" height="18" fill="#44ff44" fill-opacity="0.05"/>
<rect x="220" y="178" width="1" height="11" fill="#44ff44" fill-opacity="0.09"/>
<rect x="221" y="171" width="1" height="18" fill="#44ff44" fill-opacity="0.11"/>
<rect x="222" y="174" width="1" height="15" fill="#44ff44" fill-opacity="0.09"/>
<rect x="223" y="171" width="1" height="18" fill="#44ff44" fill-opacity="0.06"/>
<rect x="233" y="21" width="2" height="168" fill="#000" />
<rect x="235" y="21" width="9" height="168" fill="#2a2a2a" />
<rect x="233" y="21" width="11" height="168" fill="#00ff00" fill-opacity="0.14"/>
<rect x="235" y="21" width="1" height="168" fill="#00ff00" fill-opacity="0.009"/>
<rect x="238" y="21" width="1" height="168" fill="#00ff00" fill-opacity="0.025"/>
<rect x="240" y="21" width="1" height="168" fill="#00ff00" fill-opacity="0.013"/>
<rect x="242" y="21" width="1" height="168" fill="#00ff00" fill-opacity="0.019"/>
<rect x="243" y="21" width="1" height="168" fill="#00ff00" fill-opacity="0.011"/>
<rect x="233" y="150" width="11" height="39" fill="url(#cg)" />
<rect x="233" y="184" width="1" height="5" fill="#44ff44" fill-opacity="0.08"/>
<rect x="234" y="187" width="1" height="2" fill="#44ff44" fill-opacity="0.05"/>
<rect x="235" y="172" width="1" height="17" fill="#44ff44" fill-opacity="0.10"/>
<rect x="236" y="179" width="1" height="10" fill="#44ff44" fill-opacity="0.11"/>
<rect x="237" y="171" width="1" height="18" fill="#44ff44" fill-opacity="0.12"/>
<rect x="238" y="181" width="1" height="8" fill="#44ff44" fill-opacity="0.07"/>
<rect x="239" y="184" width="1" height="5" fill="#44ff44" fill-opacity="0.04"/>
<rect x="240" y="171" width="1" height="18" fill="#44ff44" fill-opacity="0.10"/>
<rect x="241" y="184" width="1" height="5" fill="#44ff44" fill-opacity="0.03"/>
<rect x="242" y="185" width="1" height="4" fill="#44ff44" fill-opacity="0.05"/>
<rect x="243" y="171" width="1" height="18" fill="#44ff44" fill-opacity="0.07"/>
<rect x="263" y="21" width="21" height="168" fill="#2a2a2a" />
<rect x="263" y="21" width="21" height="168" fill="#00ff00" fill-opacity="0.14"/>
<rect x="269" y="21" width="1" height="168" fill="#00ff00" fill-opacity="0.010"/>
<rect x="270" y="21" width="1" height="168" fill="#00ff00" fill-opacity="0.006"/>
<rect x="274" y="21" width="1" height="168" fill="#00ff00" fill-opacity="0.009"/>
<rect x="276" y="21" width="1" height="168" fill="#00ff00" fill-opacity="0.009"/>
<rect x="277" y="21" width="1" height="168" fill="#00ff00" fill-opacity="0.020"/>
<rect x="278" y="21" width="1" height="168" fill="#00ff00" fill-opacity="0.006"/>
<rect x="279" y="21" width="1" height="168" fill="#00ff00" fill-opacity="0.009"/>
<rect x="280" y="21" width="1" height="168" fill="#00ff00" fill-opacity="0.017"/>
<rect x="281" y="21" width="1" height="168" fill="#00ff00" fill-opacity="0.005"/>
<rect x="263" y="150" width="21" height="39" fill="url(#cg)" />
<rect x="263" y="174" width="1" height="15" fill="#44ff44" fill-opacity="0.08"/>
<rect x="264" y="172" width="1" height="17" fill="#44ff44" fill-opacity="0.12"/>
<rect x="265" y="185" width="1" height="4" fill="#44ff44" fill-opacity="0.05"/>
<rect x="266" y="175" width="1" height="14" fill="#44ff44" fill-opacity="0.09"/>
<rect x="267" y="180" width="1" height="9" fill="#44ff44" fill-opacity="0.07"/>
<rect x="268" y="175" width="1" height="14" fill="#44ff44" fill-opacity="0.11"/>
<rect x="269" y="172" width="1" height="17" fill="#44ff44" fill-opacity="0.03"/>
<rect x="270" y="180" width="1" height="9" fill="#44ff44" fill-opacity="0.04"/>
<rect x="271" y="182" width="1" height="7" fill="#44ff44" fill-opacity="0.06"/>
<rect x="272" y="182" width="1" height="7" fill="#44ff44" fill-opacity="0.03"/>
<rect x="273" y="178" width="1" height="11" fill="#44ff44" fill-opacity="0.07"/>
<rect x="274" y="176" width="1" height="13" fill="#44ff44" fill-opacity="0.04"/>
<rect x="275" y="175" width="1" height="14" fill="#44ff44" fill-opacity="0.06"/>
<rect x="276" y="185" width="1" height="4" fill="#44ff44" fill-opacity="0.12"/>
<rect x="277" y="174" width="1" height="15" fill="#44ff44" fill-opacity="0.10"/>
<rect x="278" y="176" width="1" height="13" fill="#44ff44" fill-opacity="0.08"/>
<rect x="279" y="175" width="1" height="14" fill="#44ff44" fill-opacity="0.05"/>
<rect x="280" y="178" width="1" height="11" fill="#44ff44" fill-opacity="0.06"/>
<rect x="281" y="174" width="1" height="15" fill="#44ff44" fill-opacity="0.03"/>
<rect x="282" y="187" width="1" height="2" fill="#44ff44" fill-opacity="0.06"/>
<rect x="283" y="183" width="1" height="6" fill="#44ff44" fill-opacity="0.05"/>
<rect x="546" y="21" width="21" height="168" fill="#2a2a2a" />
<rect x="546" y="21" width="21" height="168" fill="#00ff00" fill-opacity="0.14"/>
<rect x="546" y="21" width="1" height="168" fill="#00ff00" fill-opacity="0.009"/>
<rect x="552" y="21" width="1" height="168" fill="#00ff00" fill-opacity="0.012"/>
<rect x="553" y="21" width="1" height="168" fill="#00ff00" fill-opacity="0.013"/>
<rect x="556" y="21" width="1" height="168" fill="#00ff00" fill-opacity="0.015"/>
<rect x="557" y="21" width="1" height="168" fill="#00ff00" fill-opacity="0.022"/>
<rect x="546" y="150" width="21" height="39" fill="url(#cg)" />
<rect x="546" y="183" width="1" height="6" fill="#44ff44" fill-opacity="0.11"/>
<rect x="547" y="184" width="1" height="5" fill="#44ff44" fill-opacity="0.09"/>
<rect x="548" y="185" width="1" height="4" fill="#44ff44" fill-opacity="0.08"/>
<rect x="549" y="179" width="1" height="10" fill="#44ff44" fill-opacity="0.10"/>
<rect x="550" y="175" width="1" height="14" fill="#44ff44" fill-opacity="0.03"/>
<rect x="551" y="183" width="1" height="6" fill="#44ff44" fill-opacity="0.06"/>
<rect x="552" y="175" width="1" height="14" fill="#44ff44" fill-opacity="0.09"/>
<rect x="553" y="182" width="1" height="7" fill="#44ff44" fill-opacity="0.10"/>
<rect x="554" y="180" width="1" height="9" fill="#44ff44" fill-opacity="0.06"/>
<rect x="555" y="184" width="1" height="5" fill="#44ff44" fill-opacity="0.04"/>
<rect x="556" y="176" width="1" height="13" fill="#44ff44" fill-opacity="0.10"/>
<rect x="557" y="178" width="1" height="11" fill="#44ff44" fill-opacity="0.05"/>
<rect x="558" y="178" width="1" height="11" fill="#44ff44" fill-opacity="0.04"/>
<rect x="559" y="178" width="1" height="11" fill="#44ff44" fill-opacity="0.04"/>
<rect x="560" y="175" width="1" height="14" fill="#44ff44" fill-opacity="0.06"/>
<rect x="561" y="175" width="1" height="14" fill="#44ff44" fill-opacity="0.11"/>
<rect x="562" y="173" width="1" height="16" fill="#44ff44" fill-opacity="0.10"/>
<rect x="563" y="183" width="1" height="6" fill="#44ff44" fill-opacity="0.11"/>
<rect x="564" y="182" width="1" height="7" fill="#44ff44" fill-opacity="0.03"/>
<rect x="565" y="176" width="1" height="13" fill="#44ff44" fill-opacity="0.11"/>
<rect x="566" y="187" width="1" height="2" fill="#44ff44" fill-opacity="0.09"/>
<rect x="586" y="21" width="11" height="168" fill="#2a2a2a" />
<rect x="586" y="21" width="11" height="168" fill="#00ff00" fill-opacity="0.14"/>
<rect x="587" y="21" width="1" height="168" fill="#00ff00" fill-opacity="0.022"/>
<rect x="588" y="21" width="1" height="168" fill="#00ff00" fill-opacity="0.018"/>
<rect x="589" y="21" width="1" height="168" fill="#00ff00" fill-opacity="0.007"/>
<rect x="593" y="21" width="1" height="168" fill="#00ff00" fill-opacity="0.006"/>
<rect x="594" y="21" width="1" height="168" fill="#00ff00" fill-opacity="0.009"/>
<rect x="595" y="21" width="1" height="168" fill="#00ff00" fill-opacity="0.013"/>
<rect x="596" y="21" width="1" height="168" fill="#00ff00" fill-opacity="0.011"/>
<rect x="586" y="150" width="11" height="39" fill="url(#cg)" />
<rect x="586" y="182" width="1" height="7" fill="#44ff44" fill-opacity="0.08"/>
<rect x="587" y="180" width="1" height="9" fill="#44ff44" fill-opacity="0.08"/>
<rect x="588" y="171" width="1" height="18" fill="#44ff44" fill-opacity="0.05"/>
<rect x="589" y="174" width="1" height="15" fill="#44ff44" fill-opacity="0.09"/>
<rect x="590" y="176" width="1" height="13" fill="#44ff44" fill-opacity="0.11"/>
<rect x="591" y="184" width="1" height="5" fill="#44ff44" fill-opacity="0.11"/>
<rect x="592" y="178" width="1" height="11" fill="#44ff44" fill-opacity="0.11"/>
<rect x="593" y="186" width="1" height="3" fill="#44ff44" fill-opacity="0.12"/>
<rect x="594" y="184" width="1" height="5" fill="#44ff44" fill-opacity="0.03"/>
<rect x="595" y="177" width="1" height="12" fill="#44ff44" fill-opacity="0.05"/>
<rect x="596" y="176" width="1" height="13" fill="#44ff44" fill-opacity="0.10"/>
<rect x="606" y="21" width="11" height="168" fill="#2a2a2a" />
<rect x="606" y="21" width="11" height="168" fill="#00ff00" fill-opacity="0.14"/>
<rect x="606" y="21" width="1" height="168" fill="#00ff00" fill-opacity="0.019"/>
<rect x="607" y="21" width="1" height="168" fill="#00ff00" fill-opacity="0.020"/>
<rect x="609" y="21" width="1" height="168" fill="#00ff00" fill-opacity="0.007"/>
<rect x="606" y="150" width="11" height="39" fill="url(#cg)" />
<rect x="606" y="173" width="1" height="16" fill="#44ff44" fill-opacity="0.08"/>
<rect x="607" y="181" width="1" height="8" fill="#44ff44" fill-opacity="0.07"/>
<rect x="608" y="171" width="1" height="18" fill="#44ff44" fill-opacity="0.11"/>
<rect x="609" y="183" width="1" height="6" fill="#44ff44" fill-opacity="0.07"/>
<rect x="610" y="181" width="1" height="8" fill="#44ff44" fill-opacity="0.03"/>
<rect x="611" y="179" width="1" height="10" fill="#44ff44" fill-opacity="0.05"/>
<rect x="612" y="182" width="1" height="7" fill="#44ff44" fill-opacity="0.12"/>
<rect x="613" y="180" width="1" height="9" fill="#44ff44" fill-opacity="0.08"/>
<rect x="614" y="180" width="1" height="9" fill="#44ff44" fill-opacity="0.12"/>
<rect x="615" y="182" width="1" height="7" fill="#44ff44" fill-opacity="0.06"/>
<rect x="616" y="174" width="1" height="15" fill="#44ff44" fill-opacity="0.04"/>
<rect x="626" y="21" width="11" height="168" fill="#2a2a2a" />
<rect x="626" y="21" width="11" height="168" fill="#00ff00" fill-opacity="0.14"/>
<rect x="627" y="21" width="1" height="168" fill="#00ff00" fill-opacity="0.019"/>
<rect x="631" y="21" width="1" height="168" fill="#00ff00" fill-opacity="0.019"/>
<rect x="632" y="21" width="1" height="168" fill="#00ff00" fill-opacity="0.018"/>
<rect x="634" y="21" width="1" height="168" fill="#00ff00" fill-opacity="0.019"/>
<rect x="636" y="21" width="1" height="168" fill="#00ff00" fill-opacity="0.018"/>
<rect x="626" y="150" width="11" height="39" fill="url(#cg)" />
<rect x="626" y="184" width="1" height="5" fill="#44ff44" fill-opacity="0.08"/>
<rect x="627" y="182" width="1" height="7" fill="#44ff44" fill-opacity="0.09"/>
<rect x="628" y="183" width="1" height="6" fill="#44ff44" fill-opacity="0.08"/>
<rect x="629" y="173" width="1" height="16" fill="#44ff44" fill-opacity="0.11"/>
<rect x="630" y="175" width="1" height="14" fill="#44ff44" fill-opacity="0.10"/>
<rect x="631" y="184" width="1" height="5" fill="#44ff44" fill-opacity="0.09"/>
<rect x="632" y="187" width="1" height="2" fill="#44ff44" fill-opacity="0.06"/>
<rect x="633" y="181" width="1" height="8" fill="#44ff44" fill-opacity="0.03"/>
<rect x="634" y="179" width="1" height="10" fill="#44ff44" fill-opacity="0.06"/>
<rect x="635" y="184" width="1" height="5" fill="#44ff44" fill-opacity="0.09"/>
<rect x="636" y="173" width="1" height="16" fill="#44ff44" fill-opacity="0.12"/>
<rect x="568" y="21" width="1" height="168" fill="#2a2a2a" />
<rect x="568" y="21" width="1" height="168" fill="#2f5a2f" />
<rect x="624" y="21" width="1" height="168" fill="#2a2a2a" />
<rect x="624" y="21" width="1" height="168" fill="#2f5a2f" />
<rect x="641" y="21" width="1" height="168" fill="#2a2a2a" />
<rect x="641" y="21" width="1" height="168" fill="#2f5a2f" />
<rect x="13" y="267" width="699" height="2" fill="#f8f830" />
<rect x="13" y="269" width="699" height="1" fill="#5a5a12" />
<rect x="13" y="270" width="699" height="1" fill="#4c4c10" />
<rect x="13" y="265" width="1" height="1" fill="#4a4a10" />
<rect x="16" y="265" width="1" height="1" fill="#4a4a10" />
<rect x="18" y="265" width="1" height="1" fill="#4a4a10" />
<rect x="25" y="265" width="1" height="1" fill="#4a4a10" />
<rect x="32" y="265" width="1" height="1" fill="#4a4a10" />
<rect x="33" y="265" width="1" height="1" fill="#4a4a10" />
<rect x="38" y="265" width="1" height="1" fill="#4a4a10" />
<rect x="40" y="265" width="1" height="1" fill="#4a4a10" />
<rect x="42" y="265" width="1" height="1" fill="#4a4a10" />
<rect x="48" y="265" width="1" height="1" fill="#4a4a10" />
<rect x="55" y="265" width="1" height="1" fill="#4a4a10" />
<rect x="56" y="265" width="1" height="1" fill="#4a4a10" />
<rect x="59" y="265" width="1" height="1" fill="#4a4a10" />
<rect x="60" y="265" width="1" height="1" fill="#4a4a10" />
<rect x="61" y="265" width="1" height="1" fill="#4a4a10" />
<rect x="66" y="265" width="1" height="1" fill="#4a4a10" />
<rect x="67" y="265" width="1" height="1" fill="#4a4a10" />
<rect x="73" y="265" width="1" height="1" fill="#4a4a10" />
<rect x="74" y="265" width="1" height="1" fill="#4a4a10" />
<rect x="75" y="265" width="1" height="1" fill="#4a4a10" />
<rect x="81" y="265" width="1" height="1" fill="#4a4a10" />
<rect x="83" y="265" width="1" height="1" fill="#4a4a10" />
<rect x="87" y="265" width="1" height="1" fill="#4a4a10" />
<rect x="88" y="265" width="1" height="1" fill="#4a4a10" />
<rect x="89" y="265" width="1" height="1" fill="#4a4a10" />
<rect x="92" y="265" width="1" height="1" fill="#4a4a10" />
<rect x="93" y="265" width="1" height="1" fill="#4a4a10" />
<rect x="95" y="265" width="1" height="1" fill="#4a4a10" />
<rect x="98" y="265" width="1" height="1" fill="#4a4a10" />
<rect x="108" y="265" width="1" height="1" fill="#4a4a10" />
<rect x="111" y="265" width="1" height="1" fill="#4a4a10" />
<rect x="120" y="265" width="1" height="1" fill="#4a4a10" />
<rect x="125" y="265" width="1" height="1" fill="#4a4a10" />
<rect x="128" y="265" width="1" height="1" fill="#4a4a10" />
<rect x="133" y="265" width="1" height="1" fill="#4a4a10" />
<rect x="135" y="265" width="1" height="1" fill="#4a4a10" />
<rect x="136" y="265" width="1" height="1" fill="#4a4a10" />
<rect x="138" y="265" width="1" height="1" fill="#4a4a10" />
<rect x="140" y="265" width="1" height="1" fill="#4a4a10" />
<rect x="143" y="265" width="1" height="1" fill="#4a4a10" />
<rect x="146" y="265" width="1" height="1" fill="#4a4a10" />
<rect x="156" y="265" width="1" height="1" fill="#4a4a10" />
<rect x="168" y="265" width="1" height="1" fill="#4a4a10" />
<rect x="170" y="265" width="1" height="1" fill="#4a4a10" />
<rect x="174" y="265" width="1" height="1" fill="#4a4a10" />
<rect x="175" y="265" width="1" height="1" fill="#4a4a10" />
<rect x="179" y="265" width="1" height="1" fill="#4a4a10" />
<rect x="180" y="265" width="1" height="1" fill="#4a4a10" />
<rect x="182" y="265" width="1" height="1" fill="#4a4a10" />
<rect x="184" y="265" width="1" height="1" fill="#4a4a10" />
<rect x="185" y="265" width="1" height="1" fill="#4a4a10" />
<rect x="192" y="265" width="1" height="1" fill="#4a4a10" />
<rect x="193" y="265" width="1" height="1" fill="#4a4a10" />
<rect x="194" y="265" width="1" height="1" fill="#4a4a10" />
<rect x="204" y="265" width="1" height="1" fill="#4a4a10" />
<rect x="206" y="265" width="1" height="1" fill="#4a4a10" />
<rect x="209" y="265" width="1" height="1" fill="#4a4a10" />
<rect x="214" y="265" width="1" height="1" fill="#4a4a10" />
<rect x="215" y="265" width="1" height="1" fill="#4a4a10" />
<rect x="216" y="265" width="1" height="1" fill="#4a4a10" />
<rect x="222" y="265" width="1" height="1" fill="#4a4a10" />
<rect x="225" y="265" width="1" height="1" fill="#4a4a10" />
<rect x="227" y="265" width="1" height="1" fill="#4a4a10" />
<rect x="231" y="265" width="1" height="1" fill="#4a4a10" />
<rect x="233" y="265" width="1" height="1" fill="#4a4a10" />
<rect x="241" y="265" width="1" height="1" fill="#4a4a10" />
<rect x="247" y="265" width="1" height="1" fill="#4a4a10" />
<rect x="249" y="265" width="1" height="1" fill="#4a4a10" />
<rect x="258" y="265" width="1" height="1" fill="#4a4a10" />
<rect x="259" y="265" width="1" height="1" fill="#4a4a10" />
<rect x="264" y="265" width="1" height="1" fill="#4a4a10" />
<rect x="266" y="265" width="1" height="1" fill="#4a4a10" />
<rect x="271" y="265" width="1" height="1" fill="#4a4a10" />
<rect x="275" y="265" width="1" height="1" fill="#4a4a10" />
<rect x="276" y="265" width="1" height="1" fill="#4a4a10" />
<rect x="279" y="265" width="1" height="1" fill="#4a4a10" />
<rect x="282" y="265" width="1" height="1" fill="#4a4a10" />
<rect x="284" y="265" width="1" height="1" fill="#4a4a10" />
<rect x="285" y="265" width="1" height="1" fill="#4a4a10" />
<rect x="290" y="265" width="1" height="1" fill="#4a4a10" />
<rect x="302" y="265" width="1" height="1" fill="#4a4a10" />
<rect x="303" y="265" width="1" height="1" fill="#4a4a10" />
<rect x="311" y="265" width="1" height="1" fill="#4a4a10" />
<rect x="313" y="265" width="1" height="1" fill="#4a4a10" />
<rect x="317" y="265" width="1" height="1" fill="#4a4a10" />
<rect x="318" y="265" width="1" height="1" fill="#4a4a10" />
<rect x="330" y="265" width="1" height="1" fill="#4a4a10" />
<rect x="335" y="265" width="1" height="1" fill="#4a4a10" />
<rect x="336" y="265" width="1" height="1" fill="#4a4a10" />
<rect x="337" y="265" width="1" height="1" fill="#4a4a10" />
<rect x="340" y="265" width="1" height="1" fill="#4a4a10" />
<rect x="342" y="265" width="1" height="1" fill="#4a4a10" />
<rect x="343" y="265" width="1" height="1" fill="#4a4a10" />
<rect x="344" y="265" width="1" height="1" fill="#4a4a10" />
<rect x="345" y="265" width="1" height="1" fill="#4a4a10" />
<rect x="346" y="265" width="1" height="1" fill="#4a4a10" />
<rect x="347" y="265" width="1" height="1" fill="#4a4a10" />
<rect x="351" y="265" width="1" height="1" fill="#4a4a10" />
<rect x="352" y="265" width="1" height="1" fill="#4a4a10" />
<rect x="354" y="265" width="1" height="1" fill="#4a4a10" />
<rect x="356" y="265" width="1" height="1" fill="#4a4a10" />
<rect x="359" y="265" width="1" height="1" fill="#4a4a10" />
<rect x="363" y="265" width="1" height="1" fill="#4a4a10" />
<rect x="366" y="265" width="1" height="1" fill="#4a4a10" />
<rect x="373" y="265" width="1" height="1" fill="#4a4a10" />
<rect x="380" y="265" width="1" height="1" fill="#4a4a10" />
<rect x="381" y="265" width="1" height="1" fill="#4a4a10" />
<rect x="382" y="265" width="1" height="1" fill="#4a4a10" />
<rect x="390" y="265" width="1" height="1" fill="#4a4a10" />
<rect x="393" y="265" width="1" height="1" fill="#4a4a10" />
<rect x="397" y="265" width="1" height="1" fill="#4a4a10" />
<rect x="405" y="265" width="1" height="1" fill="#4a4a10" />
<rect x="406" y="265" width="1" height="1" fill="#4a4a10" />
<rect x="408" y="265" width="1" height="1" fill="#4a4a10" />
<rect x="411" y="265" width="1" height="1" fill="#4a4a10" />
<rect x="417" y="265" width="1" height="1" fill="#4a4a10" />
<rect x="419" y="265" width="1" height="1" fill="#4a4a10" />
<rect x="421" y="265" width="1" height="1" fill="#4a4a10" />
<rect x="433" y="265" width="1" height="1" fill="#4a4a10" />
<rect x="437" y="265" width="1" height="1" fill="#4a4a10" />
<rect x="439" y="265" width="1" height="1" fill="#4a4a10" />
<rect x="441" y="265" width="1" height="1" fill="#4a4a10" />
<rect x="446" y="265" width="1" height="1" fill="#4a4a10" />
<rect x="452" y="265" width="1" height="1" fill="#4a4a10" />
<rect x="453" y="265" width="1" height="1" fill="#4a4a10" />
<rect x="455" y="265" width="1" height="1" fill="#4a4a10" />
<rect x="459" y="265" width="1" height="1" fill="#4a4a10" />
<rect x="468" y="265" width="1" height="1" fill="#4a4a10" />
<rect x="470" y="265" width="1" height="1" fill="#4a4a10" />
<rect x="471" y="265" width="1" height="1" fill="#4a4a10" />
<rect x="473" y="265" width="1" height="1" fill="#4a4a10" />
<rect x="477" y="265" width="1" height="1" fill="#4a4a10" />
<rect x="478" y="265" width="1" height="1" fill="#4a4a10" />
<rect x="482" y="265" width="1" height="1" fill="#4a4a10" />
<rect x="486" y="265" width="1" height="1" fill="#4a4a10" />
<rect x="490" y="265" width="1" height="1" fill="#4a4a10" />
<rect x="492" y="265" width="1" height="1" fill="#4a4a10" />
<rect x="506" y="265" width="1" height="1" fill="#4a4a10" />
<rect x="508" y="265" width="1" height="1" fill="#4a4a10" />
<rect x="509" y="265" width="1" height="1" fill="#4a4a10" />
<rect x="514" y="265" width="1" height="1" fill="#4a4a10" />
<rect x="516" y="265" width="1" height="1" fill="#4a4a10" />
<rect x="517" y="265" width="1" height="1" fill="#4a4a10" />
<rect x="521" y="265" width="1" height="1" fill="#4a4a10" />
<rect x="522" y="265" width="1" height="1" fill="#4a4a10" />
<rect x="530" y="265" width="1" height="1" fill="#4a4a10" />
<rect x="534" y="265" width="1" height="1" fill="#4a4a10" />
<rect x="535" y="265" width="1" height="1" fill="#4a4a10" />
<rect x="537" y="265" width="1" height="1" fill="#4a4a10" />
<rect x="538" y="265" width="1" height="1" fill="#4a4a10" />
<rect x="540" y="265" width="1" height="1" fill="#4a4a10" />
<rect x="541" y="265" width="1" height="1" fill="#4a4a10" />
<rect x="544" y="265" width="1" height="1" fill="#4a4a10" />
<rect x="546" y="265" width="1" height="1" fill="#4a4a10" />
<rect x="548" y="265" width="1" height="1" fill="#4a4a10" />
<rect x="553" y="265" width="1" height="1" fill="#4a4a10" />
<rect x="557" y="265" width="1" height="1" fill="#4a4a10" />
<rect x="563" y="265" width="1" height="1" fill="#4a4a10" />
<rect x="571" y="265" width="1" height="1" fill="#4a4a10" />
<rect x="573" y="265" width="1" height="1" fill="#4a4a10" />
<rect x="592" y="265" width="1" height="1" fill="#4a4a10" />
<rect x="594" y="265" width="1" height="1" fill="#4a4a10" />
<rect x="597" y="265" width="1" height="1" fill="#4a4a10" />
<rect x="602" y="265" width="1" height="1" fill="#4a4a10" />
<rect x="609" y="265" width="1" height="1" fill="#4a4a10" />
<rect x="612" y="265" width="1" height="1" fill="#4a4a10" />
<rect x="613" y="265" width="1" height="1" fill="#4a4a10" />
<rect x="616" y="265" width="1" height="1" fill="#4a4a10" />
<rect x="618" y="265" width="1" height="1" fill="#4a4a10" />
<rect x="635" y="265" width="1" height="1" fill="#4a4a10" />
<rect x="636" y="265" width="1" height="1" fill="#4a4a10" />
<rect x="638" y="265" width="1" height="1" fill="#4a4a10" />
<rect x="641" y="265" width="1" height="1" fill="#4a4a10" />
<rect x="643" y="265" width="1" height="1" fill="#4a4a10" />
<rect x="644" y="265" width="1" height="1" fill="#4a4a10" />
<rect x="650" y="265" width="1" height="1" fill="#4a4a10" />
<rect x="652" y="265" width="1" height="1" fill="#4a4a10" />
<rect x="653" y="265" width="1" height="1" fill="#4a4a10" />
<rect x="658" y="265" width="1" height="1" fill="#4a4a10" />
<rect x="659" y="265" width="1" height="1" fill="#4a4a10" />
<rect x="663" y="265" width="1" height="1" fill="#4a4a10" />
<rect x="664" y="265" width="1" height="1" fill="#4a4a10" />
<rect x="666" y="265" width="1" height="1" fill="#4a4a10" />
<rect x="671" y="265" width="1" height="1" fill="#4a4a10" />
<rect x="676" y="265" width="1" height="1" fill="#4a4a10" />
<rect x="677" y="265" width="1" height="1" fill="#4a4a10" />
<rect x="679" y="265" width="1" height="1" fill="#4a4a10" />
<rect x="684" y="265" width="1" height="1" fill="#4a4a10" />
<rect x="685" y="265" width="1" height="1" fill="#4a4a10" />
<rect x="687" y="265" width="1" height="1" fill="#4a4a10" />
<rect x="694" y="265" width="1" height="1" fill="#4a4a10" />
<rect x="700" y="265" width="1" height="1" fill="#4a4a10" />
<rect x="701" y="265" width="1" height="1" fill="#4a4a10" />
<rect x="703" y="265" width="1" height="1" fill="#4a4a10" />
<rect x="705" y="265" width="1" height="1" fill="#4a4a10" />
<rect x="706" y="265" width="1" height="1" fill="#4a4a10" />
<rect x="707" y="265" width="1" height="1" fill="#4a4a10" />
<rect x="710" y="265" width="1" height="1" fill="#4a4a10" />
<rect x="13" y="315" width="49" height="1" fill="#5a165a" />
<rect x="13" y="316" width="49" height="1" fill="#3a0e3a" />
<rect x="13" y="317" width="49" height="2" fill="#f840f8" />
<rect x="15" y="320" width="1" height="1" fill="#4a104a" />
<rect x="18" y="320" width="1" height="1" fill="#4a104a" />
<rect x="21" y="320" width="1" height="1" fill="#4a104a" />
<rect x="24" y="320" width="1" height="1" fill="#4a104a" />
<rect x="30" y="320" width="1" height="1" fill="#4a104a" />
<rect x="32" y="320" width="1" height="1" fill="#4a104a" />
<rect x="35" y="320" width="1" height="1" fill="#4a104a" />
<rect x="37" y="320" width="1" height="1" fill="#4a104a" />
<rect x="40" y="320" width="1" height="1" fill="#4a104a" />
<rect x="48" y="320" width="1" height="1" fill="#4a104a" />
<rect x="53" y="320" width="1" height="1" fill="#4a104a" />
<rect x="54" y="320" width="1" height="1" fill="#4a104a" />
<rect x="59" y="320" width="1" height="1" fill="#4a104a" />
<rect x="62" y="295" width="200" height="1" fill="#5a165a" />
<rect x="62" y="296" width="200" height="1" fill="#3a0e3a" />
<rect x="62" y="297" width="200" height="2" fill="#f840f8" />
<rect x="66" y="300" width="1" height="1" fill="#4a104a" />
<rect x="67" y="300" width="1" height="1" fill="#4a104a" />
<rect x="70" y="300" width="1" height="1" fill="#4a104a" />
<rect x="71" y="300" width="1" height="1" fill="#4a104a" />
<rect x="73" y="300" width="1" height="1" fill="#4a104a" />
<rect x="74" y="300" width="1" height="1" fill="#4a104a" />
<rect x="79" y="300" width="1" height="1" fill="#4a104a" />
<rect x="80" y="300" width="1" height="1" fill="#4a104a" />
<rect x="81" y="300" width="1" height="1" fill="#4a104a" />
<rect x="83" y="300" width="1" height="1" fill="#4a104a" />
<rect x="84" y="300" width="1" height="1" fill="#4a104a" />
<rect x="88" y="300" width="1" height="1" fill="#4a104a" />
<rect x="91" y="300" width="1" height="1" fill="#4a104a" />
<rect x="92" y="300" width="1" height="1" fill="#4a104a" />
<rect x="97" y="300" width="1" height="1" fill="#4a104a" />
<rect x="102" y="300" width="1" height="1" fill="#4a104a" />
<rect x="103" y="300" width="1" height="1" fill="#4a104a" />
<rect x="104" y="300" width="1" height="1" fill="#4a104a" />
<rect x="105" y="300" width="1" height="1" fill="#4a104a" />
<rect x="112" y="300" width="1" height="1" fill="#4a104a" />
<rect x="113" y="300" width="1" height="1" fill="#4a104a" />
<rect x="123" y="300" width="1" height="1" fill="#4a104a" />
<rect x="126" y="300" width="1" height="1" fill="#4a104a" />
<rect x="129" y="300" width="1" height="1" fill="#4a104a" />
<rect x="133" y="300" width="1" height="1" fill="#4a104a" />
<rect x="134" y="300" width="1" height="1" fill="#4a104a" />
<rect x="135" y="300" width="1" height="1" fill="#4a104a" />
<rect x="138" y="300" width="1" height="1" fill="#4a104a" />
<rect x="141" y="300" width="1" height="1" fill="#4a104a" />
<rect x="144" y="300" width="1" height="1" fill="#4a104a" />
<rect x="146" y="300" width="1" height="1" fill="#4a104a" />
<rect x="150" y="300" width="1" height="1" fill="#4a104a" />
<rect x="155" y="300" width="1" height="1" fill="#4a104a" />
<rect x="163" y="300" width="1" height="1" fill="#4a104a" />
<rect x="164" y="300" width="1" height="1" fill="#4a104a" />
<rect x="165" y="300" width="1" height="1" fill="#4a104a" />
<rect x="166" y="300" width="1" height="1" fill="#4a104a" />
<rect x="168" y="300" width="1" height="1" fill="#4a104a" />
<rect x="173" y="300" width="1" height="1" fill="#4a104a" />
<rect x="179" y="300" width="1" height="1" fill="#4a104a" />
<rect x="180" y="300" width="1" height="1" fill="#4a104a" />
<rect x="182" y="300" width="1" height="1" fill="#4a104a" />
<rect x="183" y="300" width="1" height="1" fill="#4a104a" />
<rect x="189" y="300" width="1" height="1" fill="#4a104a" />
<rect x="194" y="300" width="1" height="1" fill="#4a104a" />
<rect x="195" y="300" width="1" height="1" fill="#4a104a" />
<rect x="200" y="300" width="1" height="1" fill="#4a104a" />
<rect x="201" y="300" width="1" height="1" fill="#4a104a" />
<rect x="202" y="300" width="1" height="1" fill="#4a104a" />
<rect x="206" y="300" width="1" height="1" fill="#4a104a" />
<rect x="208" y="300" width="1" height="1" fill="#4a104a" />
<rect x="217" y="300" width="1" height="1" fill="#4a104a" />
<rect x="218" y="300" width="1" height="1" fill="#4a104a" />
<rect x="219" y="300" width="1" height="1" fill="#4a104a" />
<rect x="220" y="300" width="1" height="1" fill="#4a104a" />
<rect x="223" y="300" width="1" height="1" fill="#4a104a" />
<rect x="225" y="300" width="1" height="1" fill="#4a104a" />
<rect x="226" y="300" width="1" height="1" fill="#4a104a" />
<rect x="231" y="300" width="1" height="1" fill="#4a104a" />
<rect x="233" y="300" width="1" height="1" fill="#4a104a" />
<rect x="235" y="300" width="1" height="1" fill="#4a104a" />
<rect x="236" y="300" width="1" height="1" fill="#4a104a" />
<rect x="241" y="300" width="1" height="1" fill="#4a104a" />
<rect x="243" y="300" width="1" height="1" fill="#4a104a" />
<rect x="244" y="300" width="1" height="1" fill="#4a104a" />
<rect x="246" y="300" width="1" height="1" fill="#4a104a" />
<rect x="248" y="300" width="1" height="1" fill="#4a104a" />
<rect x="251" y="300" width="1" height="1" fill="#4a104a" />
<rect x="255" y="300" width="1" height="1" fill="#4a104a" />
<rect x="257" y="300" width="1" height="1" fill="#4a104a" />
<rect x="259" y="300" width="1" height="1" fill="#4a104a" />
<rect x="262" y="315" width="198" height="1" fill="#5a165a" />
<rect x="262" y="316" width="198" height="1" fill="#3a0e3a" />
<rect x="262" y="317" width="198" height="2" fill="#f840f8" />
<rect x="262" y="320" width="1" height="1" fill="#4a104a" />
<rect x="266" y="320" width="1" height="1" fill="#4a104a" />
<rect x="267" y="320" width="1" height="1" fill="#4a104a" />
<rect x="269" y="320" width="1" height="1" fill="#4a104a" />
<rect x="272" y="320" width="1" height="1" fill="#4a104a" />
<rect x="274" y="320" width="1" height="1" fill="#4a104a" />
<rect x="276" y="320" width="1" height="1" fill="#4a104a" />
<rect x="289" y="320" width="1" height="1" fill="#4a104a" />
<rect x="293" y="320" width="1" height="1" fill="#4a104a" />
<rect x="302" y="320" width="1" height="1" fill="#4a104a" />
<rect x="307" y="320" width="1" height="1" fill="#4a104a" />
<rect x="314" y="320" width="1" height="1" fill="#4a104a" />
<rect x="322" y="320" width="1" height="1" fill="#4a104a" />
<rect x="336" y="320" width="1" height="1" fill="#4a104a" />
<rect x="338" y="320" width="1" height="1" fill="#4a104a" />
<rect x="341" y="320" width="1" height="1" fill="#4a104a" />
<rect x="344" y="320" width="1" height="1" fill="#4a104a" />
<rect x="348" y="320" width="1" height="1" fill="#4a104a" />
<rect x="349" y="320" width="1" height="1" fill="#4a104a" />
<rect x="355" y="320" width="1" height="1" fill="#4a104a" />
<rect x="356" y="320" width="1" height="1" fill="#4a104a" />
<rect x="369" y="320" width="1" height="1" fill="#4a104a" />
<rect x="371" y="320" width="1" height="1" fill="#4a104a" />
<rect x="372" y="320" width="1" height="1" fill="#4a104a" />
<rect x="381" y="320" width="1" height="1" fill="#4a104a" />
<rect x="394" y="320" width="1" height="1" fill="#4a104a" />
<rect x="398" y="320" width="1" height="1" fill="#4a104a" />
<rect x="401" y="320" width="1" height="1" fill="#4a104a" />
<rect x="405" y="320" width="1" height="1" fill="#4a104a" />
<rect x="410" y="320" width="1" height="1" fill="#4a104a" />
<rect x="413" y="320" width="1" height="1" fill="#4a104a" />
<rect x="417" y="320" width="1" height="1" fill="#4a104a" />
<rect x="421" y="320" width="1" height="1" fill="#4a104a" />
<rect x="423" y="320" width="1" height="1" fill="#4a104a" />
<rect x="426" y="320" width="1" height="1" fill="#4a104a" />
<rect x="436" y="320" width="1" height="1" fill="#4a104a" />
<rect x="439" y="320" width="1" height="1" fill="#4a104a" />
<rect x="441" y="320" width="1" height="1" fill="#4a104a" />
<rect x="460" y="295" width="202" height="1" fill="#5a165a" />
<rect x="460" y="296" width="202" height="1" fill="#3a0e3a" />
<rect x="460" y="297" width="202" height="2" fill="#f840f8" />
<rect x="462" y="300" width="1" height="1" fill="#4a104a" />
<rect x="467" y="300" width="1" height="1" fill="#4a104a" />
<rect x="469" y="300" width="1" height="1" fill="#4a104a" />
<rect x="475" y="300" width="1" height="1" fill="#4a104a" />
<rect x="481" y="300" width="1" height="1" fill="#4a104a" />
<rect x="483" y="300" width="1" height="1" fill="#4a104a" />
<rect x="492" y="300" width="1" height="1" fill="#4a104a" />
<rect x="498" y="300" width="1" height="1" fill="#4a104a" />
<rect x="499" y="300" width="1" height="1" fill="#4a104a" />
<rect x="502" y="300" width="1" height="1" fill="#4a104a" />
<rect x="512" y="300" width="1" height="1" fill="#4a104a" />
<rect x="517" y="300" width="1" height="1" fill="#4a104a" />
<rect x="520" y="300" width="1" height="1" fill="#4a104a" />
<rect x="521" y="300" width="1" height="1" fill="#4a104a" />
<rect x="523" y="300" width="1" height="1" fill="#4a104a" />
<rect x="525" y="300" width="1" height="1" fill="#4a104a" />
<rect x="530" y="300" width="1" height="1" fill="#4a104a" />
<rect x="531" y="300" width="1" height="1" fill="#4a104a" />
<rect x="533" y="300" width="1" height="1" fill="#4a104a" />
<rect x="534" y="300" width="1" height="1" fill="#4a104a" />
<rect x="536" y="300" width="1" height="1" fill="#4a104a" />
<rect x="555" y="300" width="1" height="1" fill="#4a104a" />
<rect x="556" y="300" width="1" height="1" fill="#4a104a" />
<rect x="558" y="300" width="1" height="1" fill="#4a104a" />
<rect x="560" y="300" width="1" height="1" fill="#4a104a" />
<rect x="568" y="300" width="1" height="1" fill="#4a104a" />
<rect x="576" y="300" width="1" height="1" fill="#4a104a" />
<rect x="583" y="300" width="1" height="1" fill="#4a104a" />
<rect x="584" y="300" width="1" height="1" fill="#4a104a" />
<rect x="590" y="300" width="1" height="1" fill="#4a104a" />
<rect x="591" y="300" width="1" height="1" fill="#4a104a" />
<rect x="597" y="300" width="1" height="1" fill="#4a104a" />
<rect x="608" y="300" width="1" height="1" fill="#4a104a" />
<rect x="610" y="300" width="1" height="1" fill="#4a104a" />
<rect x="611" y="300" width="1" height="1" fill="#4a104a" />
<rect x="613" y="300" width="1" height="1" fill="#4a104a" />
<rect x="615" y="300" width="1" height="1" fill="#4a104a" />
<rect x="620" y="300" width="1" height="1" fill="#4a104a" />
<rect x="625" y="300" width="1" height="1" fill="#4a104a" />
<rect x="628" y="300" width="1" height="1" fill="#4a104a" />
<rect x="640" y="300" width="1" height="1" fill="#4a104a" />
<rect x="644" y="300" width="1" height="1" fill="#4a104a" />
<rect x="652" y="300" width="1" height="1" fill="#4a104a" />
<rect x="662" y="315" width="50" height="1" fill="#5a165a" />
<rect x="662" y="316" width="50" height="1" fill="#3a0e3a" />
<rect x="662" y="317" width="50" height="2" fill="#f840f8" />
<rect x="664" y="320" width="1" height="1" fill="#4a104a" />
<rect x="670" y="320" width="1" height="1" fill="#4a104a" />
<rect x="673" y="320" width="1" height="1" fill="#4a104a" />
<rect x="674" y="320" width="1" height="1" fill="#4a104a" />
<rect x="677" y="320" width="1" height="1" fill="#4a104a" />
<rect x="680" y="320" width="1" height="1" fill="#4a104a" />
<rect x="682" y="320" width="1" height="1" fill="#4a104a" />
<rect x="691" y="320" width="1" height="1" fill="#4a104a" />
<rect x="692" y="320" width="1" height="1" fill="#4a104a" />
<rect x="695" y="320" width="1" height="1" fill="#4a104a" />
<rect x="707" y="320" width="1" height="1" fill="#4a104a" />
<rect x="62" y="298" width="1" height="20" fill="#8a2a8a" />
<rect x="262" y="298" width="1" height="20" fill="#8a2a8a" />
<rect x="460" y="298" width="1" height="20" fill="#8a2a8a" />
<rect x="662" y="298" width="1" height="20" fill="#8a2a8a" />
<rect x="13" y="389" width="4" height="4" fill="#2ee82e" />
<rect x="13" y="393" width="4" height="1" fill="#147a14" />
<rect x="14" y="394" width="1" height="1" fill="#0c480c" />
<rect x="15" y="394" width="1" height="1" fill="#0c480c" />
<rect x="13" y="386" width="1" height="3" fill="#26d026" />
<rect x="14" y="387" width="2" height="2" fill="#2ee82e" />
<rect x="18" y="221" width="1" height="80" fill="#072a07" />
<rect x="702" y="221" width="1" height="80" fill="#072a07" />
<rect x="21" y="389" width="6" height="4" fill="#2ee82e" />
<rect x="21" y="393" width="6" height="1" fill="#147a14" />
<rect x="21" y="394" width="1" height="1" fill="#0c480c" />
<rect x="23" y="388" width="1" height="1" fill="#137a13" />
<rect x="24" y="394" width="1" height="1" fill="#0c480c" />
<rect x="25" y="394" width="1" height="1" fill="#0c480c" />
<rect x="26" y="388" width="1" height="1" fill="#137a13" />
<rect x="26" y="394" width="1" height="1" fill="#0c480c" />
<rect x="31" y="389" width="5" height="4" fill="#2ee82e" />
<rect x="31" y="393" width="5" height="1" fill="#147a14" />
<rect x="33" y="388" width="1" height="1" fill="#137a13" />
<rect x="34" y="394" width="1" height="1" fill="#0c480c" />
<rect x="35" y="388" width="1" height="1" fill="#137a13" />
<rect x="35" y="394" width="1" height="1" fill="#0c480c" />
<rect x="40" y="389" width="5" height="4" fill="#2ee82e" />
<rect x="40" y="393" width="5" height="1" fill="#147a14" />
<rect x="42" y="388" width="1" height="1" fill="#137a13" />
<rect x="42" y="394" width="1" height="1" fill="#0c480c" />
<rect x="44" y="387" width="1" height="1" fill="#0e5a0e" />
<rect x="49" y="389" width="5" height="4" fill="#2ee82e" />
<rect x="49" y="393" width="5" height="1" fill="#147a14" />
<rect x="49" y="394" width="1" height="1" fill="#0c480c" />
<rect x="50" y="394" width="1" height="1" fill="#0c480c" />
<rect x="51" y="388" width="1" height="1" fill="#137a13" />
<rect x="52" y="388" width="1" height="1" fill="#137a13" />
<rect x="58" y="389" width="6" height="4" fill="#2ee82e" />
<rect x="58" y="393" width="6" height="1" fill="#147a14" />
<rect x="61" y="394" width="1" height="1" fill="#0c480c" />
<rect x="62" y="388" width="1" height="1" fill="#137a13" />
<rect x="63" y="394" width="1" height="1" fill="#0c480c" />
<rect x="68" y="389" width="201" height="4" fill="#2ee82e" />
<rect x="68" y="393" width="201" height="1" fill="#147a14" />
<rect x="70" y="394" width="1" height="1" fill="#0c480c" />
<rect x="72" y="388" width="1" height="1" fill="#137a13" />
<rect x="72" y="394" width="1" height="1" fill="#0c480c" />
<rect x="74" y="388" width="1" height="1" fill="#137a13" />
<rect x="74" y="394" width="1" height="1" fill="#0c480c" />
<rect x="75" y="387" width="1" height="1" fill="#0e5a0e" />
<rect x="75" y="394" width="1" height="1" fill="#0c480c" />
<rect x="77" y="387" width="1" height="1" fill="#0e5a0e" />
<rect x="77" y="394" width="1" height="1" fill="#0c480c" />
<rect x="78" y="388" width="1" height="1" fill="#137a13" />
<rect x="78" y="394" width="1" height="1" fill="#0c480c" />
<rect x="80" y="388" width="1" height="1" fill="#137a13" />
<rect x="80" y="394" width="1" height="1" fill="#0c480c" />
<rect x="82" y="394" width="1" height="1" fill="#0c480c" />
<rect x="84" y="388" width="1" height="1" fill="#137a13" />
<rect x="84" y="394" width="1" height="1" fill="#0c480c" />
<rect x="85" y="388" width="1" height="1" fill="#137a13" />
<rect x="86" y="394" width="1" height="1" fill="#0c480c" />
<rect x="88" y="388" width="1" height="1" fill="#137a13" />
<rect x="89" y="387" width="1" height="1" fill="#0e5a0e" />
<rect x="89" y="394" width="1" height="1" fill="#0c480c" />
<rect x="90" y="388" width="1" height="1" fill="#137a13" />
<rect x="91" y="394" width="1" height="1" fill="#0c480c" />
<rect x="92" y="387" width="1" height="1" fill="#0e5a0e" />
<rect x="92" y="394" width="1" height="1" fill="#0c480c" />
<rect x="93" y="388" width="1" height="1" fill="#137a13" />
<rect x="94" y="394" width="1" height="1" fill="#0c480c" />
<rect x="96" y="394" width="1" height="1" fill="#0c480c" />
<rect x="97" y="394" width="1" height="1" fill="#0c480c" />
<rect x="98" y="394" width="1" height="1" fill="#0c480c" />
<rect x="99" y="394" width="1" height="1" fill="#0c480c" />
<rect x="100" y="394" width="1" height="1" fill="#0c480c" />
<rect x="101" y="394" width="1" height="1" fill="#0c480c" />
<rect x="102" y="387" width="1" height="1" fill="#0e5a0e" />
<rect x="102" y="394" width="1" height="1" fill="#0c480c" />
<rect x="103" y="388" width="1" height="1" fill="#137a13" />
<rect x="103" y="394" width="1" height="1" fill="#0c480c" />
<rect x="104" y="394" width="1" height="1" fill="#0c480c" />
<rect x="105" y="387" width="1" height="1" fill="#0e5a0e" />
<rect x="105" y="394" width="1" height="1" fill="#0c480c" />
<rect x="106" y="388" width="1" height="1" fill="#137a13" />
<rect x="106" y="394" width="1" height="1" fill="#0c480c" />
<rect x="107" y="388" width="1" height="1" fill="#137a13" />
<rect x="107" y="394" width="1" height="1" fill="#0c480c" />
<rect x="108" y="394" width="1" height="1" fill="#0c480c" />
<rect x="112" y="388" width="1" height="1" fill="#137a13" />
<rect x="114" y="394" width="1" height="1" fill="#0c480c" />
<rect x="116" y="394" width="1" height="1" fill="#0c480c" />
<rect x="117" y="394" width="1" height="1" fill="#0c480c" />
<rect x="118" y="387" width="1" height="1" fill="#0e5a0e" />
<rect x="118" y="394" width="1" height="1" fill="#0c480c" />
<rect x="119" y="394" width="1" height="1" fill="#0c480c" />
<rect x="122" y="394" width="1" height="1" fill="#0c480c" />
<rect x="123" y="388" width="1" height="1" fill="#137a13" />
<rect x="123" y="394" width="1" height="1" fill="#0c480c" />
<rect x="124" y="387" width="1" height="1" fill="#0e5a0e" />
<rect x="124" y="394" width="1" height="1" fill="#0c480c" />
<rect x="126" y="388" width="1" height="1" fill="#137a13" />
<rect x="126" y="394" width="1" height="1" fill="#0c480c" />
<rect x="131" y="387" width="1" height="1" fill="#0e5a0e" />
<rect x="131" y="394" width="1" height="1" fill="#0c480c" />
<rect x="132" y="394" width="1" height="1" fill="#0c480c" />
<rect x="134" y="394" width="1" height="1" fill="#0c480c" />
<rect x="135" y="387" width="1" height="1" fill="#0e5a0e" />
<rect x="135" y="394" width="1" height="1" fill="#0c480c" />
<rect x="136" y="387" width="1" height="1" fill="#0e5a0e" />
<rect x="137" y="388" width="1" height="1" fill="#137a13" />
<rect x="137" y="394" width="1" height="1" fill="#0c480c" />
<rect x="138" y="387" width="1" height="1" fill="#0e5a0e" />
<rect x="138" y="394" width="1" height="1" fill="#0c480c" />
<rect x="140" y="388" width="1" height="1" fill="#137a13" />
<rect x="140" y="394" width="1" height="1" fill="#0c480c" />
<rect x="142" y="387" width="1" height="1" fill="#0e5a0e" />
<rect x="142" y="394" width="1" height="1" fill="#0c480c" />
<rect x="143" y="388" width="1" height="1" fill="#137a13" />
<rect x="143" y="394" width="1" height="1" fill="#0c480c" />
<rect x="144" y="394" width="1" height="1" fill="#0c480c" />
<rect x="145" y="387" width="1" height="1" fill="#0e5a0e" />
<rect x="145" y="394" width="1" height="1" fill="#0c480c" />
<rect x="146" y="394" width="1" height="1" fill="#0c480c" />
<rect x="147" y="387" width="1" height="1" fill="#0e5a0e" />
<rect x="147" y="394" width="1" height="1" fill="#0c480c" />
<rect x="149" y="387" width="1" height="1" fill="#0e5a0e" />
<rect x="150" y="388" width="1" height="1" fill="#137a13" />
<rect x="150" y="394" width="1" height="1" fill="#0c480c" />
<rect x="151" y="394" width="1" height="1" fill="#0c480c" />
<rect x="152" y="388" width="1" height="1" fill="#137a13" />
<rect x="154" y="388" width="1" height="1" fill="#137a13" />
<rect x="155" y="394" width="1" height="1" fill="#0c480c" />
<rect x="158" y="388" width="1" height="1" fill="#137a13" />
<rect x="159" y="387" width="1" height="1" fill="#0e5a0e" />
<rect x="159" y="394" width="1" height="1" fill="#0c480c" />
<rect x="160" y="388" width="1" height="1" fill="#137a13" />
<rect x="160" y="394" width="1" height="1" fill="#0c480c" />
<rect x="161" y="387" width="1" height="1" fill="#0e5a0e" />
<rect x="161" y="394" width="1" height="1" fill="#0c480c" />
<rect x="162" y="394" width="1" height="1" fill="#0c480c" />
<rect x="163" y="388" width="1" height="1" fill="#137a13" />
<rect x="164" y="394" width="1" height="1" fill="#0c480c" />
<rect x="166" y="394" width="1" height="1" fill="#0c480c" />
<rect x="167" y="388" width="1" height="1" fill="#137a13" />
<rect x="167" y="394" width="1" height="1" fill="#0c480c" />
<rect x="168" y="387" width="1" height="1" fill="#0e5a0e" />
<rect x="168" y="394" width="1" height="1" fill="#0c480c" />
<rect x="169" y="388" width="1" height="1" fill="#137a13" />
<rect x="169" y="394" width="1" height="1" fill="#0c480c" />
<rect x="170" y="388" width="1" height="1" fill="#137a13" />
<rect x="171" y="394" width="1" height="1" fill="#0c480c" />
<rect x="173" y="394" width="1" height="1" fill="#0c480c" />
<rect x="174" y="388" width="1" height="1" fill="#137a13" />
<rect x="174" y="394" width="1" height="1" fill="#0c480c" />
<rect x="175" y="388" width="1" height="1" fill="#137a13" />
<rect x="176" y="394" width="1" height="1" fill="#0c480c" />
<rect x="177" y="388" width="1" height="1" fill="#137a13" />
<rect x="177" y="394" width="1" height="1" fill="#0c480c" />
<rect x="179" y="394" width="1" height="1" fill="#0c480c" />
<rect x="181" y="388" width="1" height="1" fill="#137a13" />
<rect x="181" y="394" width="1" height="1" fill="#0c480c" />
<rect x="182" y="394" width="1" height="1" fill="#0c480c" />
<rect x="183" y="394" width="1" height="1" fill="#0c480c" />
<rect x="184" y="387" width="1" height="1" fill="#0e5a0e" />
<rect x="187" y="394" width="1" height="1" fill="#0c480c" />
<rect x="189" y="394" width="1" height="1" fill="#0c480c" />
<rect x="190" y="387" width="1" height="1" fill="#0e5a0e" />
<rect x="190" y="394" width="1" height="1" fill="#0c480c" />
<rect x="191" y="394" width="1" height="1" fill="#0c480c" />
<rect x="192" y="388" width="1" height="1" fill="#137a13" />
<rect x="194" y="394" width="1" height="1" fill="#0c480c" />
<rect x="197" y="387" width="1" height="1" fill="#0e5a0e" />
<rect x="198" y="394" width="1" height="1" fill="#0c480c" />
<rect x="199" y="387" width="1" height="1" fill="#0e5a0e" />
<rect x="199" y="394" width="1" height="1" fill="#0c480c" />
<rect x="200" y="388" width="1" height="1" fill="#137a13" />
<rect x="200" y="394" width="1" height="1" fill="#0c480c" />
<rect x="201" y="388" width="1" height="1" fill="#137a13" />
<rect x="201" y="394" width="1" height="1" fill="#0c480c" />
<rect x="202" y="394" width="1" height="1" fill="#0c480c" />
<rect x="203" y="387" width="1" height="1" fill="#0e5a0e" />
<rect x="205" y="388" width="1" height="1" fill="#137a13" />
<rect x="206" y="388" width="1" height="1" fill="#137a13" />
<rect x="206" y="394" width="1" height="1" fill="#0c480c" />
<rect x="207" y="387" width="1" height="1" fill="#0e5a0e" />
<rect x="208" y="387" width="1" height="1" fill="#0e5a0e" />
<rect x="209" y="394" width="1" height="1" fill="#0c480c" />
<rect x="210" y="388" width="1" height="1" fill="#137a13" />
<rect x="210" y="394" width="1" height="1" fill="#0c480c" />
<rect x="212" y="394" width="1" height="1" fill="#0c480c" />
<rect x="213" y="394" width="1" height="1" fill="#0c480c" />
<rect x="216" y="387" width="1" height="1" fill="#0e5a0e" />
<rect x="216" y="394" width="1" height="1" fill="#0c480c" />
<rect x="217" y="394" width="1" height="1" fill="#0c480c" />
<rect x="219" y="394" width="1" height="1" fill="#0c480c" />
<rect x="220" y="387" width="1" height="1" fill="#0e5a0e" />
<rect x="221" y="388" width="1" height="1" fill="#137a13" />
<rect x="221" y="394" width="1" height="1" fill="#0c480c" />
<rect x="222" y="388" width="1" height="1" fill="#137a13" />
<rect x="223" y="394" width="1" height="1" fill="#0c480c" />
<rect x="224" y="394" width="1" height="1" fill="#0c480c" />
<rect x="225" y="388" width="1" height="1" fill="#137a13" />
<rect x="227" y="388" width="1" height="1" fill="#137a13" />
<rect x="227" y="394" width="1" height="1" fill="#0c480c" />
<rect x="229" y="394" width="1" height="1" fill="#0c480c" />
<rect x="230" y="394" width="1" height="1" fill="#0c480c" />
<rect x="231" y="388" width="1" height="1" fill="#137a13" />
<rect x="231" y="394" width="1" height="1" fill="#0c480c" />
<rect x="232" y="387" width="1" height="1" fill="#0e5a0e" />
<rect x="232" y="394" width="1" height="1" fill="#0c480c" />
<rect x="234" y="394" width="1" height="1" fill="#0c480c" />
<rect x="236" y="394" width="1" height="1" fill="#0c480c" />
<rect x="239" y="387" width="1" height="1" fill="#0e5a0e" />
<rect x="239" y="394" width="1" height="1" fill="#0c480c" />
<rect x="241" y="394" width="1" height="1" fill="#0c480c" />
<rect x="242" y="394" width="1" height="1" fill="#0c480c" />
<rect x="244" y="388" width="1" height="1" fill="#137a13" />
<rect x="245" y="388" width="1" height="1" fill="#137a13" />
<rect x="245" y="394" width="1" height="1" fill="#0c480c" />
<rect x="246" y="394" width="1" height="1" fill="#0c480c" />
<rect x="247" y="387" width="1" height="1" fill="#0e5a0e" />
<rect x="249" y="394" width="1" height="1" fill="#0c480c" />
<rect x="251" y="388" width="1" height="1" fill="#137a13" />
<rect x="252" y="394" width="1" height="1" fill="#0c480c" />
<rect x="253" y="388" width="1" height="1" fill="#137a13" />
<rect x="254" y="387" width="1" height="1" fill="#0e5a0e" />
<rect x="255" y="387" width="1" height="1" fill="#0e5a0e" />
<rect x="255" y="394" width="1" height="1" fill="#0c480c" />
<rect x="256" y="387" width="1" height="1" fill="#0e5a0e" />
<rect x="258" y="388" width="1" height="1" fill="#137a13" />
<rect x="260" y="394" width="1" height="1" fill="#0c480c" />
<rect x="261" y="394" width="1" height="1" fill="#0c480c" />
<rect x="262" y="394" width="1" height="1" fill="#0c480c" />
<rect x="263" y="394" width="1" height="1" fill="#0c480c" />
<rect x="266" y="387" width="1" height="1" fill="#0e5a0e" />
<rect x="266" y="394" width="1" height="1" fill="#0c480c" />
<rect x="267" y="394" width="1" height="1" fill="#0c480c" />
<rect x="268" y="394" width="1" height="1" fill="#0c480c" />
<rect x="273" y="389" width="5" height="4" fill="#2ee82e" />
<rect x="273" y="393" width="5" height="1" fill="#147a14" />
<rect x="273" y="388" width="1" height="1" fill="#137a13" />
<rect x="274" y="394" width="1" height="1" fill="#0c480c" />
<rect x="276" y="388" width="1" height="1" fill="#137a13" />
<rect x="276" y="394" width="1" height="1" fill="#0c480c" />
<rect x="282" y="389" width="5" height="4" fill="#2ee82e" />
<rect x="282" y="393" width="5" height="1" fill="#147a14" />
<rect x="282" y="394" width="1" height="1" fill="#0c480c" />
<rect x="285" y="388" width="1" height="1" fill="#137a13" />
<rect x="286" y="394" width="1" height="1" fill="#0c480c" />
<rect x="291" y="389" width="4" height="4" fill="#2ee82e" />
<rect x="291" y="393" width="4" height="1" fill="#147a14" />
<rect x="291" y="388" width="1" height="1" fill="#137a13" />
<rect x="291" y="394" width="1" height="1" fill="#0c480c" />
<rect x="292" y="388" width="1" height="1" fill="#137a13" />
<rect x="293" y="394" width="1" height="1" fill="#0c480c" />
<rect x="294" y="388" width="1" height="1" fill="#137a13" />
<rect x="294" y="394" width="1" height="1" fill="#0c480c" />
<rect x="299" y="389" width="4" height="4" fill="#2ee82e" />
<rect x="299" y="393" width="4" height="1" fill="#147a14" />
<rect x="299" y="388" width="1" height="1" fill="#137a13" />
<rect x="299" y="394" width="1" height="1" fill="#0c480c" />
<rect x="300" y="394" width="1" height="1" fill="#0c480c" />
<rect x="301" y="387" width="1" height="1" fill="#0e5a0e" />
<rect x="301" y="394" width="1" height="1" fill="#0c480c" />
<rect x="307" y="389" width="4" height="4" fill="#2ee82e" />
<rect x="307" y="393" width="4" height="1" fill="#147a14" />
<rect x="307" y="387" width="1" height="1" fill="#0e5a0e" />
<rect x="308" y="387" width="1" height="1" fill="#0e5a0e" />
<rect x="308" y="394" width="1" height="1" fill="#0c480c" />
<rect x="309" y="388" width="1" height="1" fill="#137a13" />
<rect x="309" y="394" width="1" height="1" fill="#0c480c" />
<rect x="310" y="394" width="1" height="1" fill="#0c480c" />
<rect x="315" y="389" width="5" height="4" fill="#2ee82e" />
<rect x="315" y="393" width="5" height="1" fill="#147a14" />
<rect x="315" y="394" width="1" height="1" fill="#0c480c" />
<rect x="316" y="394" width="1" height="1" fill="#0c480c" />
<rect x="319" y="394" width="1" height="1" fill="#0c480c" />
<rect x="324" y="389" width="4" height="4" fill="#2ee82e" />
<rect x="324" y="393" width="4" height="1" fill="#147a14" />
<rect x="324" y="387" width="1" height="1" fill="#0e5a0e" />
<rect x="324" y="394" width="1" height="1" fill="#0c480c" />
<rect x="325" y="387" width="1" height="1" fill="#0e5a0e" />
<rect x="325" y="394" width="1" height="1" fill="#0c480c" />
<rect x="326" y="394" width="1" height="1" fill="#0c480c" />
<rect x="327" y="388" width="1" height="1" fill="#137a13" />
<rect x="332" y="389" width="5" height="4" fill="#2ee82e" />
<rect x="332" y="393" width="5" height="1" fill="#147a14" />
<rect x="332" y="394" width="1" height="1" fill="#0c480c" />
<rect x="334" y="394" width="1" height="1" fill="#0c480c" />
<rect x="335" y="394" width="1" height="1" fill="#0c480c" />
<rect x="336" y="394" width="1" height="1" fill="#0c480c" />
<rect x="341" y="389" width="5" height="4" fill="#2ee82e" />
<rect x="341" y="393" width="5" height="1" fill="#147a14" />
<rect x="341" y="394" width="1" height="1" fill="#0c480c" />
<rect x="343" y="394" width="1" height="1" fill="#0c480c" />
<rect x="344" y="388" width="1" height="1" fill="#137a13" />
<rect x="344" y="394" width="1" height="1" fill="#0c480c" />
<rect x="345" y="388" width="1" height="1" fill="#137a13" />
<rect x="350" y="389" width="5" height="4" fill="#2ee82e" />
<rect x="350" y="393" width="5" height="1" fill="#147a14" />
<rect x="350" y="388" width="1" height="1" fill="#137a13" />
<rect x="351" y="394" width="1" height="1" fill="#0c480c" />
<rect x="352" y="388" width="1" height="1" fill="#137a13" />
<rect x="354" y="388" width="1" height="1" fill="#137a13" />
<rect x="354" y="394" width="1" height="1" fill="#0c480c" />
<rect x="359" y="389" width="5" height="4" fill="#2ee82e" />
<rect x="359" y="393" width="5" height="1" fill="#147a14" />
<rect x="359" y="394" width="1" height="1" fill="#0c480c" />
<rect x="362" y="387" width="1" height="1" fill="#0e5a0e" />
<rect x="363" y="387" width="1" height="1" fill="#0e5a0e" />
<rect x="368" y="389" width="6" height="4" fill="#2ee82e" />
<rect x="368" y="393" width="6" height="1" fill="#147a14" />
<rect x="368" y="387" width="1" height="1" fill="#0e5a0e" />
<rect x="368" y="394" width="1" height="1" fill="#0c480c" />
<rect x="369" y="387" width="1" height="1" fill="#0e5a0e" />
<rect x="369" y="394" width="1" height="1" fill="#0c480c" />
<rect x="370" y="388" width="1" height="1" fill="#137a13" />
<rect x="371" y="388" width="1" height="1" fill="#137a13" />
<rect x="371" y="394" width="1" height="1" fill="#0c480c" />
<rect x="372" y="387" width="1" height="1" fill="#0e5a0e" />
<rect x="378" y="389" width="6" height="4" fill="#2ee82e" />
<rect x="378" y="393" width="6" height="1" fill="#147a14" />
<rect x="378" y="394" width="1" height="1" fill="#0c480c" />
<rect x="379" y="387" width="1" height="1" fill="#0e5a0e" />
<rect x="379" y="394" width="1" height="1" fill="#0c480c" />
<rect x="381" y="394" width="1" height="1" fill="#0c480c" />
<rect x="388" y="389" width="4" height="4" fill="#2ee82e" />
<rect x="388" y="393" width="4" height="1" fill="#147a14" />
<rect x="388" y="394" width="1" height="1" fill="#0c480c" />
<rect x="391" y="387" width="1" height="1" fill="#0e5a0e" />
<rect x="391" y="394" width="1" height="1" fill="#0c480c" />
<rect x="396" y="389" width="6" height="4" fill="#2ee82e" />
<rect x="396" y="393" width="6" height="1" fill="#147a14" />
<rect x="396" y="394" width="1" height="1" fill="#0c480c" />
<rect x="397" y="394" width="1" height="1" fill="#0c480c" />
<rect x="399" y="394" width="1" height="1" fill="#0c480c" />
<rect x="400" y="394" width="1" height="1" fill="#0c480c" />
<rect x="406" y="389" width="5" height="4" fill="#2ee82e" />
<rect x="406" y="393" width="5" height="1" fill="#147a14" />
<rect x="406" y="394" width="1" height="1" fill="#0c480c" />
<rect x="407" y="394" width="1" height="1" fill="#0c480c" />
<rect x="409" y="394" width="1" height="1" fill="#0c480c" />
<rect x="415" y="389" width="5" height="4" fill="#2ee82e" />
<rect x="415" y="393" width="5" height="1" fill="#147a14" />
<rect x="416" y="387" width="1" height="1" fill="#0e5a0e" />
<rect x="417" y="394" width="1" height="1" fill="#0c480c" />
<rect x="418" y="388" width="1" height="1" fill="#137a13" />
<rect x="418" y="394" width="1" height="1" fill="#0c480c" />
<rect x="424" y="389" width="6" height="4" fill="#2ee82e" />
<rect x="424" y="393" width="6" height="1" fill="#147a14" />
<rect x="424" y="387" width="1" height="1" fill="#0e5a0e" />
<rect x="426" y="388" width="1" height="1" fill="#137a13" />
<rect x="428" y="387" width="1" height="1" fill="#0e5a0e" />
<rect x="428" y="394" width="1" height="1" fill="#0c480c" />
<rect x="429" y="388" width="1" height="1" fill="#137a13" />
<rect x="434" y="389" width="5" height="4" fill="#2ee82e" />
<rect x="434" y="393" width="5" height="1" fill="#147a14" />
<rect x="434" y="394" width="1" height="1" fill="#0c480c" />
<rect x="435" y="388" width="1" height="1" fill="#137a13" />
<rect x="443" y="389" width="5" height="4" fill="#2ee82e" />
<rect x="443" y="393" width="5" height="1" fill="#147a14" />
<rect x="443" y="388" width="1" height="1" fill="#137a13" />
<rect x="446" y="387" width="1" height="1" fill="#0e5a0e" />
<rect x="452" y="389" width="5" height="4" fill="#2ee82e" />
<rect x="452" y="393" width="5" height="1" fill="#147a14" />
<rect x="452" y="394" width="1" height="1" fill="#0c480c" />
<rect x="453" y="388" width="1" height="1" fill="#137a13" />
<rect x="453" y="394" width="1" height="1" fill="#0c480c" />
<rect x="454" y="387" width="1" height="1" fill="#0e5a0e" />
<rect x="455" y="387" width="1" height="1" fill="#0e5a0e" />
<rect x="455" y="394" width="1" height="1" fill="#0c480c" />
<rect x="456" y="388" width="1" height="1" fill="#137a13" />
<rect x="461" y="389" width="206" height="4" fill="#2ee82e" />
<rect x="461" y="393" width="206" height="1" fill="#147a14" />
<rect x="461" y="388" width="1" height="1" fill="#137a13" />
<rect x="461" y="394" width="1" height="1" fill="#0c480c" />
<rect x="463" y="387" width="1" height="1" fill="#0e5a0e" />
<rect x="464" y="387" width="1" height="1" fill="#0e5a0e" />
<rect x="464" y="394" width="1" height="1" fill="#0c480c" />
<rect x="465" y="394" width="1" height="1" fill="#0c480c" />
<rect x="469" y="394" width="1" height="1" fill="#0c480c" />
<rect x="470" y="394" width="1" height="1" fill="#0c480c" />
<rect x="471" y="388" width="1" height="1" fill="#137a13" />
<rect x="471" y="394" width="1" height="1" fill="#0c480c" />
<rect x="472" y="394" width="1" height="1" fill="#0c480c" />
<rect x="473" y="394" width="1" height="1" fill="#0c480c" />
<rect x="474" y="388" width="1" height="1" fill="#137a13" />
<rect x="475" y="394" width="1" height="1" fill="#0c480c" />
<rect x="476" y="394" width="1" height="1" fill="#0c480c" />
<rect x="477" y="387" width="1" height="1" fill="#0e5a0e" />
<rect x="482" y="394" width="1" height="1" fill="#0c480c" />
<rect x="485" y="387" width="1" height="1" fill="#0e5a0e" />
<rect x="485" y="394" width="1" height="1" fill="#0c480c" />
<rect x="486" y="388" width="1" height="1" fill="#137a13" />
<rect x="487" y="394" width="1" height="1" fill="#0c480c" />
<rect x="488" y="387" width="1" height="1" fill="#0e5a0e" />
<rect x="489" y="394" width="1" height="1" fill="#0c480c" />
<rect x="491" y="387" width="1" height="1" fill="#0e5a0e" />
<rect x="491" y="394" width="1" height="1" fill="#0c480c" />
<rect x="492" y="387" width="1" height="1" fill="#0e5a0e" />
<rect x="494" y="387" width="1" height="1" fill="#0e5a0e" />
<rect x="494" y="394" width="1" height="1" fill="#0c480c" />
<rect x="496" y="387" width="1" height="1" fill="#0e5a0e" />
<rect x="498" y="394" width="1" height="1" fill="#0c480c" />
<rect x="499" y="394" width="1" height="1" fill="#0c480c" />
<rect x="500" y="394" width="1" height="1" fill="#0c480c" />
<rect x="501" y="388" width="1" height="1" fill="#137a13" />
<rect x="504" y="394" width="1" height="1" fill="#0c480c" />
<rect x="505" y="394" width="1" height="1" fill="#0c480c" />
<rect x="506" y="388" width="1" height="1" fill="#137a13" />
<rect x="507" y="388" width="1" height="1" fill="#137a13" />
<rect x="507" y="394" width="1" height="1" fill="#0c480c" />
<rect x="509" y="388" width="1" height="1" fill="#137a13" />
<rect x="510" y="394" width="1" height="1" fill="#0c480c" />
<rect x="511" y="387" width="1" height="1" fill="#0e5a0e" />
<rect x="512" y="394" width="1" height="1" fill="#0c480c" />
<rect x="513" y="394" width="1" height="1" fill="#0c480c" />
<rect x="514" y="394" width="1" height="1" fill="#0c480c" />
<rect x="516" y="394" width="1" height="1" fill="#0c480c" />
<rect x="517" y="394" width="1" height="1" fill="#0c480c" />
<rect x="519" y="387" width="1" height="1" fill="#0e5a0e" />
<rect x="520" y="394" width="1" height="1" fill="#0c480c" />
<rect x="521" y="388" width="1" height="1" fill="#137a13" />
<rect x="522" y="394" width="1" height="1" fill="#0c480c" />
<rect x="523" y="394" width="1" height="1" fill="#0c480c" />
<rect x="524" y="388" width="1" height="1" fill="#137a13" />
<rect x="527" y="388" width="1" height="1" fill="#137a13" />
<rect x="527" y="394" width="1" height="1" fill="#0c480c" />
<rect x="528" y="388" width="1" height="1" fill="#137a13" />
<rect x="528" y="394" width="1" height="1" fill="#0c480c" />
<rect x="529" y="388" width="1" height="1" fill="#137a13" />
<rect x="529" y="394" width="1" height="1" fill="#0c480c" />
<rect x="530" y="388" width="1" height="1" fill="#137a13" />
<rect x="530" y="394" width="1" height="1" fill="#0c480c" />
<rect x="532" y="388" width="1" height="1" fill="#137a13" />
<rect x="532" y="394" width="1" height="1" fill="#0c480c" />
<rect x="533" y="394" width="1" height="1" fill="#0c480c" />
<rect x="535" y="394" width="1" height="1" fill="#0c480c" />
<rect x="537" y="388" width="1" height="1" fill="#137a13" />
<rect x="538" y="388" width="1" height="1" fill="#137a13" />
<rect x="538" y="394" width="1" height="1" fill="#0c480c" />
<rect x="540" y="394" width="1" height="1" fill="#0c480c" />
<rect x="542" y="388" width="1" height="1" fill="#137a13" />
<rect x="544" y="394" width="1" height="1" fill="#0c480c" />
<rect x="547" y="394" width="1" height="1" fill="#0c480c" />
<rect x="548" y="388" width="1" height="1" fill="#137a13" />
<rect x="548" y="394" width="1" height="1" fill="#0c480c" />
<rect x="549" y="394" width="1" height="1" fill="#0c480c" />
<rect x="551" y="388" width="1" height="1" fill="#137a13" />
<rect x="552" y="387" width="1" height="1" fill="#0e5a0e" />
<rect x="552" y="394" width="1" height="1" fill="#0c480c" />
<rect x="553" y="387" width="1" height="1" fill="#0e5a0e" />
<rect x="554" y="394" width="1" height="1" fill="#0c480c" />
<rect x="555" y="394" width="1" height="1" fill="#0c480c" />
<rect x="556" y="387" width="1" height="1" fill="#0e5a0e" />
<rect x="556" y="394" width="1" height="1" fill="#0c480c" />
<rect x="558" y="394" width="1" height="1" fill="#0c480c" />
<rect x="559" y="387" width="1" height="1" fill="#0e5a0e" />
<rect x="561" y="394" width="1" height="1" fill="#0c480c" />
<rect x="562" y="387" width="1" height="1" fill="#0e5a0e" />
<rect x="562" y="394" width="1" height="1" fill="#0c480c" />
<rect x="563" y="388" width="1" height="1" fill="#137a13" />
<rect x="563" y="394" width="1" height="1" fill="#0c480c" />
<rect x="564" y="394" width="1" height="1" fill="#0c480c" />
<rect x="566" y="394" width="1" height="1" fill="#0c480c" />
<rect x="568" y="388" width="1" height="1" fill="#137a13" />
<rect x="572" y="388" width="1" height="1" fill="#137a13" />
<rect x="573" y="394" width="1" height="1" fill="#0c480c" />
<rect x="575" y="394" width="1" height="1" fill="#0c480c" />
<rect x="576" y="387" width="1" height="1" fill="#0e5a0e" />
<rect x="577" y="388" width="1" height="1" fill="#137a13" />
<rect x="578" y="388" width="1" height="1" fill="#137a13" />
<rect x="579" y="394" width="1" height="1" fill="#0c480c" />
<rect x="580" y="388" width="1" height="1" fill="#137a13" />
<rect x="582" y="394" width="1" height="1" fill="#0c480c" />
<rect x="583" y="387" width="1" height="1" fill="#0e5a0e" />
<rect x="584" y="388" width="1" height="1" fill="#137a13" />
<rect x="585" y="394" width="1" height="1" fill="#0c480c" />
<rect x="586" y="394" width="1" height="1" fill="#0c480c" />
<rect x="587" y="387" width="1" height="1" fill="#0e5a0e" />
<rect x="589" y="388" width="1" height="1" fill="#137a13" />
<rect x="590" y="388" width="1" height="1" fill="#137a13" />
<rect x="591" y="394" width="1" height="1" fill="#0c480c" />
<rect x="592" y="394" width="1" height="1" fill="#0c480c" />
<rect x="594" y="387" width="1" height="1" fill="#0e5a0e" />
<rect x="594" y="394" width="1" height="1" fill="#0c480c" />
<rect x="595" y="388" width="1" height="1" fill="#137a13" />
<rect x="596" y="388" width="1" height="1" fill="#137a13" />
<rect x="596" y="394" width="1" height="1" fill="#0c480c" />
<rect x="597" y="388" width="1" height="1" fill="#137a13" />
<rect x="597" y="394" width="1" height="1" fill="#0c480c" />
<rect x="598" y="388" width="1" height="1" fill="#137a13" />
<rect x="599" y="394" width="1" height="1" fill="#0c480c" />
<rect x="600" y="388" width="1" height="1" fill="#137a13" />
<rect x="602" y="388" width="1" height="1" fill="#137a13" />
<rect x="603" y="388" width="1" height="1" fill="#137a13" />
<rect x="603" y="394" width="1" height="1" fill="#0c480c" />
<rect x="604" y="394" width="1" height="1" fill="#0c480c" />
<rect x="606" y="388" width="1" height="1" fill="#137a13" />
<rect x="606" y="394" width="1" height="1" fill="#0c480c" />
<rect x="607" y="387" width="1" height="1" fill="#0e5a0e" />
<rect x="607" y="394" width="1" height="1" fill="#0c480c" />
<rect x="608" y="388" width="1" height="1" fill="#137a13" />
<rect x="608" y="394" width="1" height="1" fill="#0c480c" />
<rect x="609" y="387" width="1" height="1" fill="#0e5a0e" />
<rect x="610" y="388" width="1" height="1" fill="#137a13" />
<rect x="610" y="394" width="1" height="1" fill="#0c480c" />
<rect x="611" y="388" width="1" height="1" fill="#137a13" />
<rect x="611" y="394" width="1" height="1" fill="#0c480c" />
<rect x="612" y="387" width="1" height="1" fill="#0e5a0e" />
<rect x="613" y="388" width="1" height="1" fill="#137a13" />
<rect x="613" y="394" width="1" height="1" fill="#0c480c" />
<rect x="614" y="394" width="1" height="1" fill="#0c480c" />
<rect x="615" y="394" width="1" height="1" fill="#0c480c" />
<rect x="616" y="394" width="1" height="1" fill="#0c480c" />
<rect x="618" y="388" width="1" height="1" fill="#137a13" />
<rect x="620" y="394" width="1" height="1" fill="#0c480c" />
<rect x="623" y="394" width="1" height="1" fill="#0c480c" />
<rect x="624" y="394" width="1" height="1" fill="#0c480c" />
<rect x="626" y="394" width="1" height="1" fill="#0c480c" />
<rect x="627" y="388" width="1" height="1" fill="#137a13" />
<rect x="628" y="394" width="1" height="1" fill="#0c480c" />
<rect x="629" y="394" width="1" height="1" fill="#0c480c" />
<rect x="633" y="387" width="1" height="1" fill="#0e5a0e" />
<rect x="634" y="388" width="1" height="1" fill="#137a13" />
<rect x="634" y="394" width="1" height="1" fill="#0c480c" />
<rect x="635" y="394" width="1" height="1" fill="#0c480c" />
<rect x="637" y="394" width="1" height="1" fill="#0c480c" />
<rect x="638" y="394" width="1" height="1" fill="#0c480c" />
<rect x="639" y="394" width="1" height="1" fill="#0c480c" />
<rect x="641" y="388" width="1" height="1" fill="#137a13" />
<rect x="642" y="387" width="1" height="1" fill="#0e5a0e" />
<rect x="644" y="387" width="1" height="1" fill="#0e5a0e" />
<rect x="648" y="388" width="1" height="1" fill="#137a13" />
<rect x="648" y="394" width="1" height="1" fill="#0c480c" />
<rect x="649" y="388" width="1" height="1" fill="#137a13" />
<rect x="649" y="394" width="1" height="1" fill="#0c480c" />
<rect x="650" y="387" width="1" height="1" fill="#0e5a0e" />
<rect x="651" y="394" width="1" height="1" fill="#0c480c" />
<rect x="652" y="394" width="1" height="1" fill="#0c480c" />
<rect x="653" y="387" width="1" height="1" fill="#0e5a0e" />
<rect x="654" y="394" width="1" height="1" fill="#0c480c" />
<rect x="656" y="388" width="1" height="1" fill="#137a13" />
<rect x="656" y="394" width="1" height="1" fill="#0c480c" />
<rect x="657" y="387" width="1" height="1" fill="#0e5a0e" />
<rect x="657" y="394" width="1" height="1" fill="#0c480c" />
<rect x="658" y="394" width="1" height="1" fill="#0c480c" />
<rect x="659" y="388" width="1" height="1" fill="#137a13" />
<rect x="659" y="394" width="1" height="1" fill="#0c480c" />
<rect x="660" y="394" width="1" height="1" fill="#0c480c" />
<rect x="664" y="387" width="1" height="1" fill="#0e5a0e" />
<rect x="665" y="387" width="1" height="1" fill="#0e5a0e" />
<rect x="671" y="389" width="6" height="4" fill="#2ee82e" />
<rect x="671" y="393" width="6" height="1" fill="#147a14" />
<rect x="671" y="388" width="1" height="1" fill="#137a13" />
<rect x="672" y="394" width="1" height="1" fill="#0c480c" />
<rect x="675" y="387" width="1" height="1" fill="#0e5a0e" />
<rect x="676" y="394" width="1" height="1" fill="#0c480c" />
<rect x="681" y="389" width="5" height="4" fill="#2ee82e" />
<rect x="681" y="393" width="5" height="1" fill="#147a14" />
<rect x="681" y="394" width="1" height="1" fill="#0c480c" />
<rect x="682" y="388" width="1" height="1" fill="#137a13" />
<rect x="682" y="394" width="1" height="1" fill="#0c480c" />
<rect x="684" y="388" width="1" height="1" fill="#137a13" />
<rect x="685" y="394" width="1" height="1" fill="#0c480c" />
<rect x="690" y="389" width="4" height="4" fill="#2ee82e" />
<rect x="690" y="393" width="4" height="1" fill="#147a14" />
<rect x="690" y="387" width="1" height="1" fill="#0e5a0e" />
<rect x="698" y="389" width="3" height="4" fill="#2ee82e" />
<rect x="698" y="393" width="3" height="1" fill="#147a14" />
<rect x="698" y="387" width="1" height="1" fill="#0e5a0e" />
<rect x="698" y="394" width="1" height="1" fill="#0c480c" />
<rect x="699" y="394" width="1" height="1" fill="#0c480c" />
<rect x="700" y="394" width="1" height="1" fill="#0c480c" />
<rect x="705" y="389" width="5" height="4" fill="#2ee82e" />
<rect x="705" y="393" width="5" height="1" fill="#147a14" />
<rect x="705" y="387" width="1" height="1" fill="#0e5a0e" />
<rect x="705" y="394" width="1" height="1" fill="#0c480c" />
<rect x="706" y="388" width="1" height="1" fill="#137a13" />
<rect x="707" y="387" width="1" height="1" fill="#0e5a0e" />
<rect x="708" y="388" width="1" height="1" fill="#137a13" />
<rect x="708" y="394" width="1" height="1" fill="#0c480c" />
<defs><linearGradient id="sg" gradientUnits="userSpaceOnUse" x1="0" y1="300" x2="0" y2="390"><stop offset="0" stop-color="#083008"/><stop offset="0.55" stop-color="#0d500d"/><stop offset="0.8" stop-color="#189418"/><stop offset="1" stop-color="#36f036"/></linearGradient></defs>
<defs><clipPath id="bclip"><rect x="13" y="221" width="699" height="199"/></clipPath></defs><g clip-path="url(#bclip)">
<rect x="17" y="221" width="1" height="80" fill="#083008" />
<path d="M17.5,300 L17.5,352 C17.6,368 18.6,380 20.2,385.5 S22,389.5 23.5,390.5" fill="none" stroke="url(#sg)" stroke-width="1.4" shape-rendering="geometricPrecision"/>
<rect x="27" y="221" width="1" height="80" fill="#083008" />
<path d="M27.5,300 L27.5,352 C27.6,368 28.6,380 30.2,385.5 S32,389.5 33.5,390.5" fill="none" stroke="url(#sg)" stroke-width="1.4" shape-rendering="geometricPrecision"/>
<rect x="36" y="221" width="1" height="80" fill="#083008" />
<path d="M36.5,300 L36.5,352 C36.6,368 37.6,380 39.2,385.5 S41,389.5 42.5,390.5" fill="none" stroke="url(#sg)" stroke-width="1.4" shape-rendering="geometricPrecision"/>
<rect x="45" y="221" width="1" height="80" fill="#083008" />
<path d="M45.5,300 L45.5,352 C45.6,368 46.6,380 48.2,385.5 S50,389.5 51.5,390.5" fill="none" stroke="url(#sg)" stroke-width="1.4" shape-rendering="geometricPrecision"/>
<rect x="54" y="221" width="1" height="80" fill="#083008" />
<path d="M54.5,300 L54.5,352 C54.6,368 55.6,380 57.2,385.5 S59,389.5 60.5,390.5" fill="none" stroke="url(#sg)" stroke-width="1.4" shape-rendering="geometricPrecision"/>
<rect x="64" y="221" width="1" height="80" fill="#083008" />
<path d="M64.5,300 L64.5,352 C64.6,368 65.6,380 67.2,385.5 S69,389.5 70.5,390.5" fill="none" stroke="url(#sg)" stroke-width="1.4" shape-rendering="geometricPrecision"/>
<rect x="269" y="221" width="1" height="80" fill="#083008" />
<path d="M269.5,300 L269.5,352 C269.6,368 270.6,380 272.2,385.5 S274,389.5 275.5,390.5" fill="none" stroke="url(#sg)" stroke-width="1.4" shape-rendering="geometricPrecision"/>
<rect x="278" y="221" width="1" height="80" fill="#083008" />
<path d="M278.5,300 L278.5,352 C278.6,368 279.6,380 281.2,385.5 S283,389.5 284.5,390.5" fill="none" stroke="url(#sg)" stroke-width="1.4" shape-rendering="geometricPrecision"/>
<rect x="287" y="221" width="1" height="80" fill="#083008" />
<path d="M287.5,300 L287.5,352 C287.6,368 288.6,380 290.2,385.5 S292,389.5 293.5,390.5" fill="none" stroke="url(#sg)" stroke-width="1.4" shape-rendering="geometricPrecision"/>
<rect x="295" y="221" width="1" height="80" fill="#083008" />
<path d="M295.5,300 L295.5,352 C295.6,368 296.6,380 298.2,385.5 S300,389.5 301.5,390.5" fill="none" stroke="url(#sg)" stroke-width="1.4" shape-rendering="geometricPrecision"/>
<rect x="303" y="221" width="1" height="80" fill="#083008" />
<path d="M303.5,300 L303.5,352 C303.6,368 304.6,380 306.2,385.5 S308,389.5 309.5,390.5" fill="none" stroke="url(#sg)" stroke-width="1.4" shape-rendering="geometricPrecision"/>
<rect x="311" y="221" width="1" height="80" fill="#083008" />
<path d="M311.5,300 L311.5,352 C311.6,368 312.6,380 314.2,385.5 S316,389.5 317.5,390.5" fill="none" stroke="url(#sg)" stroke-width="1.4" shape-rendering="geometricPrecision"/>
<rect x="320" y="221" width="1" height="80" fill="#083008" />
<path d="M320.5,300 L320.5,352 C320.6,368 321.6,380 323.2,385.5 S325,389.5 326.5,390.5" fill="none" stroke="url(#sg)" stroke-width="1.4" shape-rendering="geometricPrecision"/>
<rect x="328" y="221" width="1" height="80" fill="#083008" />
<path d="M328.5,300 L328.5,352 C328.6,368 329.6,380 331.2,385.5 S333,389.5 334.5,390.5" fill="none" stroke="url(#sg)" stroke-width="1.4" shape-rendering="geometricPrecision"/>
<rect x="337" y="221" width="1" height="80" fill="#083008" />
<path d="M337.5,300 L337.5,352 C337.6,368 338.6,380 340.2,385.5 S342,389.5 343.5,390.5" fill="none" stroke="url(#sg)" stroke-width="1.4" shape-rendering="geometricPrecision"/>
<rect x="346" y="221" width="1" height="80" fill="#083008" />
<path d="M346.5,300 L346.5,352 C346.6,368 347.6,380 349.2,385.5 S351,389.5 352.5,390.5" fill="none" stroke="url(#sg)" stroke-width="1.4" shape-rendering="geometricPrecision"/>
<rect x="355" y="221" width="1" height="80" fill="#083008" />
<path d="M355.5,300 L355.5,352 C355.6,368 356.6,380 358.2,385.5 S360,389.5 361.5,390.5" fill="none" stroke="url(#sg)" stroke-width="1.4" shape-rendering="geometricPrecision"/>
<rect x="364" y="221" width="1" height="80" fill="#083008" />
<path d="M364.5,300 L364.5,352 C364.6,368 365.6,380 367.2,385.5 S369,389.5 370.5,390.5" fill="none" stroke="url(#sg)" stroke-width="1.4" shape-rendering="geometricPrecision"/>
<rect x="374" y="221" width="1" height="80" fill="#083008" />
<path d="M374.5,300 L374.5,352 C374.6,368 375.6,380 377.2,385.5 S379,389.5 380.5,390.5" fill="none" stroke="url(#sg)" stroke-width="1.4" shape-rendering="geometricPrecision"/>
<rect x="384" y="221" width="1" height="80" fill="#083008" />
<path d="M384.5,300 L384.5,352 C384.6,368 385.6,380 387.2,385.5 S389,389.5 390.5,390.5" fill="none" stroke="url(#sg)" stroke-width="1.4" shape-rendering="geometricPrecision"/>
<rect x="392" y="221" width="1" height="80" fill="#083008" />
<path d="M392.5,300 L392.5,352 C392.6,368 393.6,380 395.2,385.5 S397,389.5 398.5,390.5" fill="none" stroke="url(#sg)" stroke-width="1.4" shape-rendering="geometricPrecision"/>
<rect x="402" y="221" width="1" height="80" fill="#083008" />
<path d="M402.5,300 L402.5,352 C402.6,368 403.6,380 405.2,385.5 S407,389.5 408.5,390.5" fill="none" stroke="url(#sg)" stroke-width="1.4" shape-rendering="geometricPrecision"/>
<rect x="411" y="221" width="1" height="80" fill="#083008" />
<path d="M411.5,300 L411.5,352 C411.6,368 412.6,380 414.2,385.5 S416,389.5 417.5,390.5" fill="none" stroke="url(#sg)" stroke-width="1.4" shape-rendering="geometricPrecision"/>
<rect x="420" y="221" width="1" height="80" fill="#083008" />
<path d="M420.5,300 L420.5,352 C420.6,368 421.6,380 423.2,385.5 S425,389.5 426.5,390.5" fill="none" stroke="url(#sg)" stroke-width="1.4" shape-rendering="geometricPrecision"/>
<rect x="430" y="221" width="1" height="80" fill="#083008" />
<path d="M430.5,300 L430.5,352 C430.6,368 431.6,380 433.2,385.5 S435,389.5 436.5,390.5" fill="none" stroke="url(#sg)" stroke-width="1.4" shape-rendering="geometricPrecision"/>
<rect x="439" y="221" width="1" height="80" fill="#083008" />
<path d="M439.5,300 L439.5,352 C439.6,368 440.6,380 442.2,385.5 S444,389.5 445.5,390.5" fill="none" stroke="url(#sg)" stroke-width="1.4" shape-rendering="geometricPrecision"/>
<rect x="448" y="221" width="1" height="80" fill="#083008" />
<path d="M448.5,300 L448.5,352 C448.6,368 449.6,380 451.2,385.5 S453,389.5 454.5,390.5" fill="none" stroke="url(#sg)" stroke-width="1.4" shape-rendering="geometricPrecision"/>
<rect x="457" y="221" width="1" height="80" fill="#083008" />
<path d="M457.5,300 L457.5,352 C457.6,368 458.6,380 460.2,385.5 S462,389.5 463.5,390.5" fill="none" stroke="url(#sg)" stroke-width="1.4" shape-rendering="geometricPrecision"/>
<rect x="667" y="221" width="1" height="80" fill="#083008" />
<path d="M667.5,300 L667.5,352 C667.6,368 668.6,380 670.2,385.5 S672,389.5 673.5,390.5" fill="none" stroke="url(#sg)" stroke-width="1.4" shape-rendering="geometricPrecision"/>
<rect x="677" y="221" width="1" height="80" fill="#083008" />
<path d="M677.5,300 L677.5,352 C677.6,368 678.6,380 680.2,385.5 S682,389.5 683.5,390.5" fill="none" stroke="url(#sg)" stroke-width="1.4" shape-rendering="geometricPrecision"/>
<rect x="686" y="221" width="1" height="80" fill="#083008" />
<path d="M686.5,300 L686.5,352 C686.6,368 687.6,380 689.2,385.5 S691,389.5 692.5,390.5" fill="none" stroke="url(#sg)" stroke-width="1.4" shape-rendering="geometricPrecision"/>
<rect x="694" y="221" width="1" height="80" fill="#083008" />
<path d="M694.5,300 L694.5,352 C694.6,368 695.6,380 697.2,385.5 S699,389.5 700.5,390.5" fill="none" stroke="url(#sg)" stroke-width="1.4" shape-rendering="geometricPrecision"/>
<rect x="701" y="221" width="1" height="80" fill="#083008" />
<path d="M701.5,300 L701.5,352 C701.6,368 702.6,380 704.2,385.5 S706,389.5 707.5,390.5" fill="none" stroke="url(#sg)" stroke-width="1.4" shape-rendering="geometricPrecision"/>
<rect x="710" y="221" width="1" height="80" fill="#083008" />
<path d="M710.5,300 L710.5,352 C710.6,368 711.6,380 713.2,385.5 S715,389.5 716.5,390.5" fill="none" stroke="url(#sg)" stroke-width="1.4" shape-rendering="geometricPrecision"/>
</g>
<rect x="12" y="21" width="1" height="400" fill="#5a5a5a" />
<rect x="712" y="21" width="1" height="400" fill="#5a5a5a" />
<rect x="12" y="220" width="700" height="1" fill="#5a5a5a" />
<rect x="12" y="420" width="701" height="1" fill="#5a5a5a" />
<polygon points="53,21 72,21 62.5,31.5" fill="#1f7fdc" shape-rendering="geometricPrecision" />
<polygon points="53,21 62.5,21 62.5,31.5" fill="#2c9cf2" shape-rendering="geometricPrecision" />
<polygon points="22,221 22,240.5 12.5,230.5" fill="#1f7fdc" shape-rendering="geometricPrecision" />
<polygon points="22,221 22,230.5 12.5,230.5" fill="#2c9cf2" shape-rendering="geometricPrecision" />
<polygon points="712,60.599999999999994 712,80.0 702,70.3" fill="#8c8c00" shape-rendering="geometricPrecision" />
<polygon points="712,60.599999999999994 712,70.3 702,70.3" fill="#d6d600" shape-rendering="geometricPrecision" />
<polygon points="712,260.6 712,280.0 702,270.3" fill="#8c8c00" shape-rendering="geometricPrecision" />
<polygon points="712,260.6 712,270.3 702,270.3" fill="#d6d600" shape-rendering="geometricPrecision" />
<polygon points="1,64.0 7,64.0 11,70.5 7,77.0 1,77.0" fill="#dede00" shape-rendering="geometricPrecision" />
<text x="4.6" y="75.1" font-size="13" font-family="Liberation Serif" font-weight="bold" fill="#000" text-anchor="middle" textLength="5" lengthAdjust="spacingAndGlyphs">1</text>
<polygon points="1,114.0 7,114.0 11,120.5 7,127.0 1,127.0" fill="#dd00dd" shape-rendering="geometricPrecision" />
<text x="4.6" y="125.1" font-size="13" font-family="Liberation Serif" font-weight="bold" fill="#000" text-anchor="middle" textLength="5" lengthAdjust="spacingAndGlyphs">2</text>
<polygon points="1,189.0 7,189.0 11,195.5 7,202.0 1,202.0" fill="#22dd22" shape-rendering="geometricPrecision" />
<text x="4.6" y="200.1" font-size="13" font-family="Liberation Serif" font-weight="bold" fill="#000" text-anchor="middle" textLength="5" lengthAdjust="spacingAndGlyphs">4</text>
<polygon points="1,264.0 7,264.0 11,270.5 7,277.0 1,277.0" fill="#dede00" shape-rendering="geometricPrecision" />
<text x="4.6" y="275.1" font-size="13" font-family="Liberation Serif" font-weight="bold" fill="#000" text-anchor="middle" textLength="5" lengthAdjust="spacingAndGlyphs">1</text>
<polygon points="1,314.0 7,314.0 11,320.5 7,327.0 1,327.0" fill="#dd00dd" shape-rendering="geometricPrecision" />
<text x="4.6" y="325.1" font-size="13" font-family="Liberation Serif" font-weight="bold" fill="#000" text-anchor="middle" textLength="5" lengthAdjust="spacingAndGlyphs">2</text>
<polygon points="1,389.0 7,389.0 11,395.5 7,402.0 1,402.0" fill="#22dd22" shape-rendering="geometricPrecision" />
<text x="4.6" y="400.1" font-size="13" font-family="Liberation Serif" font-weight="bold" fill="#000" text-anchor="middle" textLength="5" lengthAdjust="spacingAndGlyphs">4</text>
<text x="172.5" y="13.7" font-size="15" fill="#f0f0f0" text-anchor="start" font-weight="normal" textLength="56.5" lengthAdjust="spacingAndGlyphs"  stroke="#202020" stroke-width="0.3">M 20.0ms</text>
<text x="241.9" y="13.7" font-size="15" fill="#f0f0f0" text-anchor="start" font-weight="normal" textLength="84.9" lengthAdjust="spacingAndGlyphs"  stroke="#202020" stroke-width="0.3">Delay 62.14ms</text>
<text x="347.6" y="13.7" font-size="15" fill="#f0f0f0" text-anchor="start" font-weight="normal" textLength="52.9" lengthAdjust="spacingAndGlyphs"  stroke="#202020" stroke-width="0.3">Z 1.00ms</text>
<text x="702" y="13.7" font-size="15" fill="#f0e800" text-anchor="start" font-weight="normal" textLength="40.3" lengthAdjust="spacingAndGlyphs"  stroke="#202020" stroke-width="0.3">f &lt; 1Hz</text>
<rect x="112" y="1" width="50" height="18" rx="2.5" fill="#cc0000" shape-rendering="geometricPrecision"/>
<text x="124" y="14.8" font-size="15" fill="#000" text-anchor="start" font-weight="normal" textLength="26" lengthAdjust="spacingAndGlyphs"  stroke="#cc0000" stroke-width="0.15">Stop</text>
<text x="718.2" y="33.7" font-size="12" fill="#f4f4f4" text-anchor="start" font-weight="normal" textLength="77.7" lengthAdjust="spacingAndGlyphs"  stroke="#000" stroke-width="0.3">Sa 50.0MSa/s</text>
<text x="723.7" y="47.6" font-size="12" fill="#f4f4f4" text-anchor="start" font-weight="normal" textLength="67.4" lengthAdjust="spacingAndGlyphs"  stroke="#000" stroke-width="0.3">Curr 14Mpts</text>
<rect x="713" y="56" width="87" height="80" fill="#212121" />
<rect x="713" y="56" width="87" height="1" fill="#3a3a3a" />
<rect x="713" y="57" width="1" height="79" fill="#333333" />
<text x="717.5" y="80" font-size="13" fill="#f0f000" text-anchor="start" font-weight="normal" textLength="28.1" lengthAdjust="spacingAndGlyphs"  stroke="#212121" stroke-width="0.3">Edge</text>
<rect x="769" y="69" width="28.5" height="16" rx="2.5" fill="#d4d400" shape-rendering="geometricPrecision"/>
<text x="773" y="79.8" font-size="11.5" fill="#000" text-anchor="start" font-weight="normal" textLength="21.4" lengthAdjust="spacingAndGlyphs" >CH1</text>
<text x="780" y="100" font-size="12.7" fill="#f0f000" text-anchor="start" font-weight="normal" textLength="16.2" lengthAdjust="spacingAndGlyphs"  stroke="#212121" stroke-width="0.3">DC</text>
<text x="717.5" y="120" font-size="13" fill="#f0f000" text-anchor="start" font-weight="normal" textLength="6.5" lengthAdjust="spacingAndGlyphs"  stroke="#212121" stroke-width="0.3">L</text>
<text x="733.7" y="120" font-size="13" fill="#f0f000" text-anchor="start" font-weight="normal" textLength="41.3" lengthAdjust="spacingAndGlyphs"  stroke="#212121" stroke-width="0.3">0.00mV</text>
<path d="M728,90.8 H735.2 V101.2 H741" fill="none" stroke="#e8e800" stroke-width="1.1" shape-rendering="geometricPrecision"/>
<polygon points="730.5,95.5 740,95.5 735.2,99.5" fill="#dcdc00" shape-rendering="geometricPrecision" />
<path d="M713,163 L713,193 L800,193 L800,143 L751,143 Q746,143 746,148 L746,160 Q746,163 743,163 Z" fill="#212121" shape-rendering="geometricPrecision"/>
<rect x="713" y="145" width="32" height="18" fill="#141414"/>
<path d="M713.5,193 L713.5,163.5 L743,163.5 Q746.5,163.5 746.5,160 L746.5,148 Q746.5,143.5 751,143.5 L800,143.5" fill="none" stroke="#3a3a3a" stroke-width="1" shape-rendering="geometricPrecision"/>
<text x="731" y="158" font-size="12.5" fill="#f0f000" text-anchor="middle" font-weight="normal"  stroke="#141414" stroke-width="0.15">1</text>
<rect x="763" y="146" width="35" height="15.5" rx="3" fill="#d4d400" shape-rendering="geometricPrecision"/>
<text x="765.5" y="158" font-size="12.5" fill="#000" text-anchor="start" font-weight="normal" textLength="31.5" lengthAdjust="spacingAndGlyphs" >DC1M</text>
<text x="739.7" y="174.7" font-size="11.5" fill="#f0f0f0" text-anchor="start" font-weight="normal" textLength="54.299999999999955" lengthAdjust="spacingAndGlyphs"  stroke="#212121" stroke-width="0.3">5.00 V/div</text>
<text x="754.6" y="189.3" font-size="11.5" fill="#f0f0f0" text-anchor="start" font-weight="normal" textLength="39.39999999999998" lengthAdjust="spacingAndGlyphs"  stroke="#212121" stroke-width="0.3">10.00 V</text>
<path d="M713,220 L713,250 L800,250 L800,200 L751,200 Q746,200 746,205 L746,217 Q746,220 743,220 Z" fill="#212121" shape-rendering="geometricPrecision"/>
<rect x="713" y="202" width="32" height="18" fill="#141414"/>
<path d="M713.5,250 L713.5,220.5 L743,220.5 Q746.5,220.5 746.5,217 L746.5,205 Q746.5,200.5 751,200.5 L800,200.5" fill="none" stroke="#3a3a3a" stroke-width="1" shape-rendering="geometricPrecision"/>
<text x="731" y="215" font-size="12.5" fill="#ff20ff" text-anchor="middle" font-weight="normal"  stroke="#141414" stroke-width="0.15">2</text>
<rect x="763" y="203" width="35" height="15.5" rx="3" fill="#cc00cc" shape-rendering="geometricPrecision"/>
<text x="765.5" y="215" font-size="12.5" fill="#000" text-anchor="start" font-weight="normal" textLength="31.5" lengthAdjust="spacingAndGlyphs" >DC1M</text>
<text x="739.7" y="231.7" font-size="11.5" fill="#f0f0f0" text-anchor="start" font-weight="normal" textLength="54.299999999999955" lengthAdjust="spacingAndGlyphs"  stroke="#212121" stroke-width="0.3">5.00 V/div</text>
<text x="748.5" y="246.3" font-size="11.5" fill="#f0f0f0" text-anchor="start" font-weight="normal" textLength="45.5" lengthAdjust="spacingAndGlyphs"  stroke="#212121" stroke-width="0.3">0.00 mV</text>
<path d="M713,277 L713,307 L800,307 L800,257 L751,257 Q746,257 746,262 L746,274 Q746,277 743,277 Z" fill="#212121" shape-rendering="geometricPrecision"/>
<rect x="713" y="259" width="32" height="18" fill="#141414"/>
<path d="M713.5,307 L713.5,277.5 L743,277.5 Q746.5,277.5 746.5,274 L746.5,262 Q746.5,257.5 751,257.5 L800,257.5" fill="none" stroke="#3a3a3a" stroke-width="1" shape-rendering="geometricPrecision"/>
<text x="731" y="272" font-size="12.5" fill="#20f020" text-anchor="middle" font-weight="normal"  stroke="#141414" stroke-width="0.15">4</text>
<rect x="763" y="260" width="35" height="15.5" rx="3" fill="#00c800" shape-rendering="geometricPrecision"/>
<text x="765.5" y="272" font-size="12.5" fill="#000" text-anchor="start" font-weight="normal" textLength="31.5" lengthAdjust="spacingAndGlyphs" >DC50</text>
<text x="731" y="288.7" font-size="11.5" fill="#f0f0f0" text-anchor="start" font-weight="normal" textLength="63" lengthAdjust="spacingAndGlyphs"  stroke="#212121" stroke-width="0.3">10.0 mV/div</text>
<text x="736.8" y="303.3" font-size="11.5" fill="#f0f0f0" text-anchor="start" font-weight="normal" textLength="57.200000000000045" lengthAdjust="spacingAndGlyphs"  stroke="#212121" stroke-width="0.3">-30.00 mV</text>
<text x="14.6" y="435.8" font-size="14.8" fill="#f0f0f0" text-anchor="start" font-weight="normal" textLength="27.4" lengthAdjust="spacingAndGlyphs"  stroke="#000" stroke-width="0.3">Gate</text>
<text x="144.4" y="435.8" font-size="14.8" fill="#22e822" text-anchor="start" font-weight="normal" textLength="100.8" lengthAdjust="spacingAndGlyphs"  stroke="#000" stroke-width="0.3">RMS[4]=11.24mV</text>
<text x="718.5" y="435.8" font-size="14.8" fill="#2a9cff" text-anchor="start" font-weight="normal" textLength="27.5" lengthAdjust="spacingAndGlyphs"  stroke="#000" stroke-width="0.3">Gate</text>
<rect x="712" y="440" width="88" height="40" fill="#212121" />
<rect x="12.5" y="440.5" width="108" height="37.5" rx="4" fill="#212121" stroke="#3a3a3a" stroke-width="1" shape-rendering="geometricPrecision"/>
<rect x="130.5" y="440.5" width="108" height="37.5" rx="4" fill="#212121" stroke="#3a3a3a" stroke-width="1" shape-rendering="geometricPrecision"/>
<rect x="248.5" y="440.5" width="108" height="37.5" rx="4" fill="#212121" stroke="#1e88e8" stroke-width="2" shape-rendering="geometricPrecision"/>
<rect x="366.5" y="440.5" width="108" height="37.5" rx="4" fill="#212121" stroke="#3a3a3a" stroke-width="1" shape-rendering="geometricPrecision"/>
<rect x="602.5" y="440.5" width="108" height="37.5" rx="4" fill="#212121" stroke="#3a3a3a" stroke-width="1" shape-rendering="geometricPrecision"/>
<text x="52.5" y="456.7" font-size="14.2" fill="#f0f0f0" text-anchor="start" font-weight="normal" textLength="27.5" lengthAdjust="spacingAndGlyphs"  stroke="#212121" stroke-width="0.3">Gate</text>
<text x="57.9" y="472.5" font-size="14.2" fill="#f0f0f0" text-anchor="start" font-weight="normal" textLength="17.5" lengthAdjust="spacingAndGlyphs"  stroke="#212121" stroke-width="0.3">On</text>
<text x="159.8" y="456.8" font-size="14.2" fill="#f0f0f0" text-anchor="start" font-weight="normal" textLength="49.2" lengthAdjust="spacingAndGlyphs"  stroke="#212121" stroke-width="0.3">CursorA</text>
<text x="160.5" y="475" font-size="14.2" fill="#f0f0f0" text-anchor="start" font-weight="normal" textLength="48.5" lengthAdjust="spacingAndGlyphs"  stroke="#212121" stroke-width="0.3">60.14ms</text>
<text x="277.9" y="456.8" font-size="14.2" fill="#2a9cff" text-anchor="start" font-weight="normal" textLength="49.4" lengthAdjust="spacingAndGlyphs"  stroke="#212121" stroke-width="0.3">CursorB</text>
<text x="278.7" y="475" font-size="14.2" fill="#2a9cff" text-anchor="start" font-weight="normal" textLength="48.6" lengthAdjust="spacingAndGlyphs"  stroke="#212121" stroke-width="0.3">64.10ms</text>
<text x="388.8" y="466.6" font-size="14.2" fill="#f0f0f0" text-anchor="start" font-weight="normal" textLength="63.4" lengthAdjust="spacingAndGlyphs"  stroke="#212121" stroke-width="0.3">CursorA-B</text>
<path d="M136.63,456.28 A5.0,5.0 0 1 1 132.67,462.49" fill="none" stroke="#2090f0" stroke-width="1.5" shape-rendering="geometricPrecision"/>
<polygon points="129.9,461.8 132.6,458.4 135.3,461.8" fill="#2090f0" shape-rendering="geometricPrecision" />
<path d="M254.63,456.28 A5.0,5.0 0 1 1 250.67,462.49" fill="none" stroke="#2090f0" stroke-width="1.5" shape-rendering="geometricPrecision"/>
<polygon points="247.9,461.8 250.6,458.4 253.3,461.8" fill="#2090f0" shape-rendering="geometricPrecision" />
<path d="M372.63,456.28 A5.0,5.0 0 1 1 368.67,462.49" fill="none" stroke="#2090f0" stroke-width="1.5" shape-rendering="geometricPrecision"/>
<polygon points="365.9,461.8 368.6,458.4 371.3,461.8" fill="#2090f0" shape-rendering="geometricPrecision" />
<path d="M645,455.3 H669.5 Q672.6,455.3 672.6,458.4 V465.4 Q672.6,468.5 669.5,468.5 H639" fill="none" stroke="#d8d8d8" stroke-width="2.9" shape-rendering="geometricPrecision"/>
<polygon points="636.5,455 647,449.8 647,461" fill="#d8d8d8" shape-rendering="geometricPrecision" />
<polygon points="5,3 17,3 17,6.5 7,6.5 7,8.5 15,8.5 17,10.5 17,15 15,17 3,17 3,13.5 13,13.5 13,11 5,11 3,9 3,5" fill="#cfcfcf" shape-rendering="geometricPrecision" />
<polygon points="18,3 22,3 22,17 18,17" fill="#cfcfcf" shape-rendering="geometricPrecision" />
<polygon points="25,3 37,3 37,6.5 27,6.5 27,13.5 33,13.5 33,12 29,12 29,9 37,9 37,17 25,17 23,15 23,5" fill="#cfcfcf" shape-rendering="geometricPrecision" />
<polygon points="38,3 42,3 42,13.5 51,13.5 51,17 40,17 38,15" fill="#cfcfcf" shape-rendering="geometricPrecision" />
<polygon points="54,3 65,3 65,6.5 56,6.5 56,8.5 65,8.5 65,11 56,11 56,13.5 65,13.5 65,17 54,17 52,15 52,5" fill="#cfcfcf" shape-rendering="geometricPrecision" />
<polygon points="66,17 66,3 70,3 77,11.5 77,3 81,3 81,17 77,17 70,8.5 70,17" fill="#cfcfcf" shape-rendering="geometricPrecision" />
<polygon points="82,3 95,3 95,6.5 90.5,6.5 90.5,17 86.5,17 86.5,6.5 82,6.5" fill="#cfcfcf" shape-rendering="geometricPrecision" />
<line x1="262.5" y1="221" x2="262.5" y2="420" stroke="#e8e8e8" stroke-width="1" stroke-dasharray="1 1"/>
<line x1="460.5" y1="221" x2="460.5" y2="420" stroke="#e8e8e8" stroke-width="1" stroke-dasharray="1 1"/>
<circle cx="254.6" cy="247.5" r="6.6" fill="#8a00aa" shape-rendering="geometricPrecision"/>
<text x="254.6" y="252" font-size="11" fill="#000" text-anchor="middle" font-weight="normal" >A</text>
<circle cx="468.3" cy="247.5" r="6.6" fill="#009a9a" shape-rendering="geometricPrecision"/>
<text x="468.4" y="252" font-size="11" fill="#000" text-anchor="middle" font-weight="normal" >B</text>
<rect x="734" y="461" width="6" height="7" fill="#1e8ee8" />
<rect x="735.5" y="463" width="3" height="3" fill="#212121" />
<rect x="735.5" y="464" width="3" height="1" fill="#1e8ee8" />
<rect x="736" y="468" width="2" height="1" fill="#1e8ee8" />
<rect x="727" y="469" width="20" height="1.5" fill="#1e8ee8" />
<rect x="730" y="470" width="2" height="2" fill="#1e8ee8" />
<rect x="742" y="470" width="2" height="2" fill="#1e8ee8" />
<rect x="728" y="472" width="6" height="7" fill="#1e8ee8" />
<rect x="729.5" y="474" width="3" height="3" fill="#212121" />
<rect x="729.5" y="475" width="3" height="1" fill="#1e8ee8" />
<rect x="740" y="472" width="6" height="7" fill="#1e8ee8" />
<rect x="741.5" y="474" width="3" height="3" fill="#212121" />
<rect x="741.5" y="475" width="3" height="1" fill="#1e8ee8" />
<text x="761.2" y="475.2" font-size="11.5" fill="#2a9cff" text-anchor="start" font-weight="normal" textLength="10" lengthAdjust="spacingAndGlyphs"  stroke="#212121" stroke-width="0.1">17</text>
<text x="777.5" y="475.2" font-size="11.5" fill="#2a9cff" text-anchor="start" font-weight="normal" textLength="2.8" lengthAdjust="spacingAndGlyphs"  stroke="#212121" stroke-width="0.1">:</text>
<text x="782.3" y="475.2" font-size="11.5" fill="#2a9cff" text-anchor="start" font-weight="normal" textLength="12" lengthAdjust="spacingAndGlyphs"  stroke="#212121" stroke-width="0.1">26</text></svg></body></html>
